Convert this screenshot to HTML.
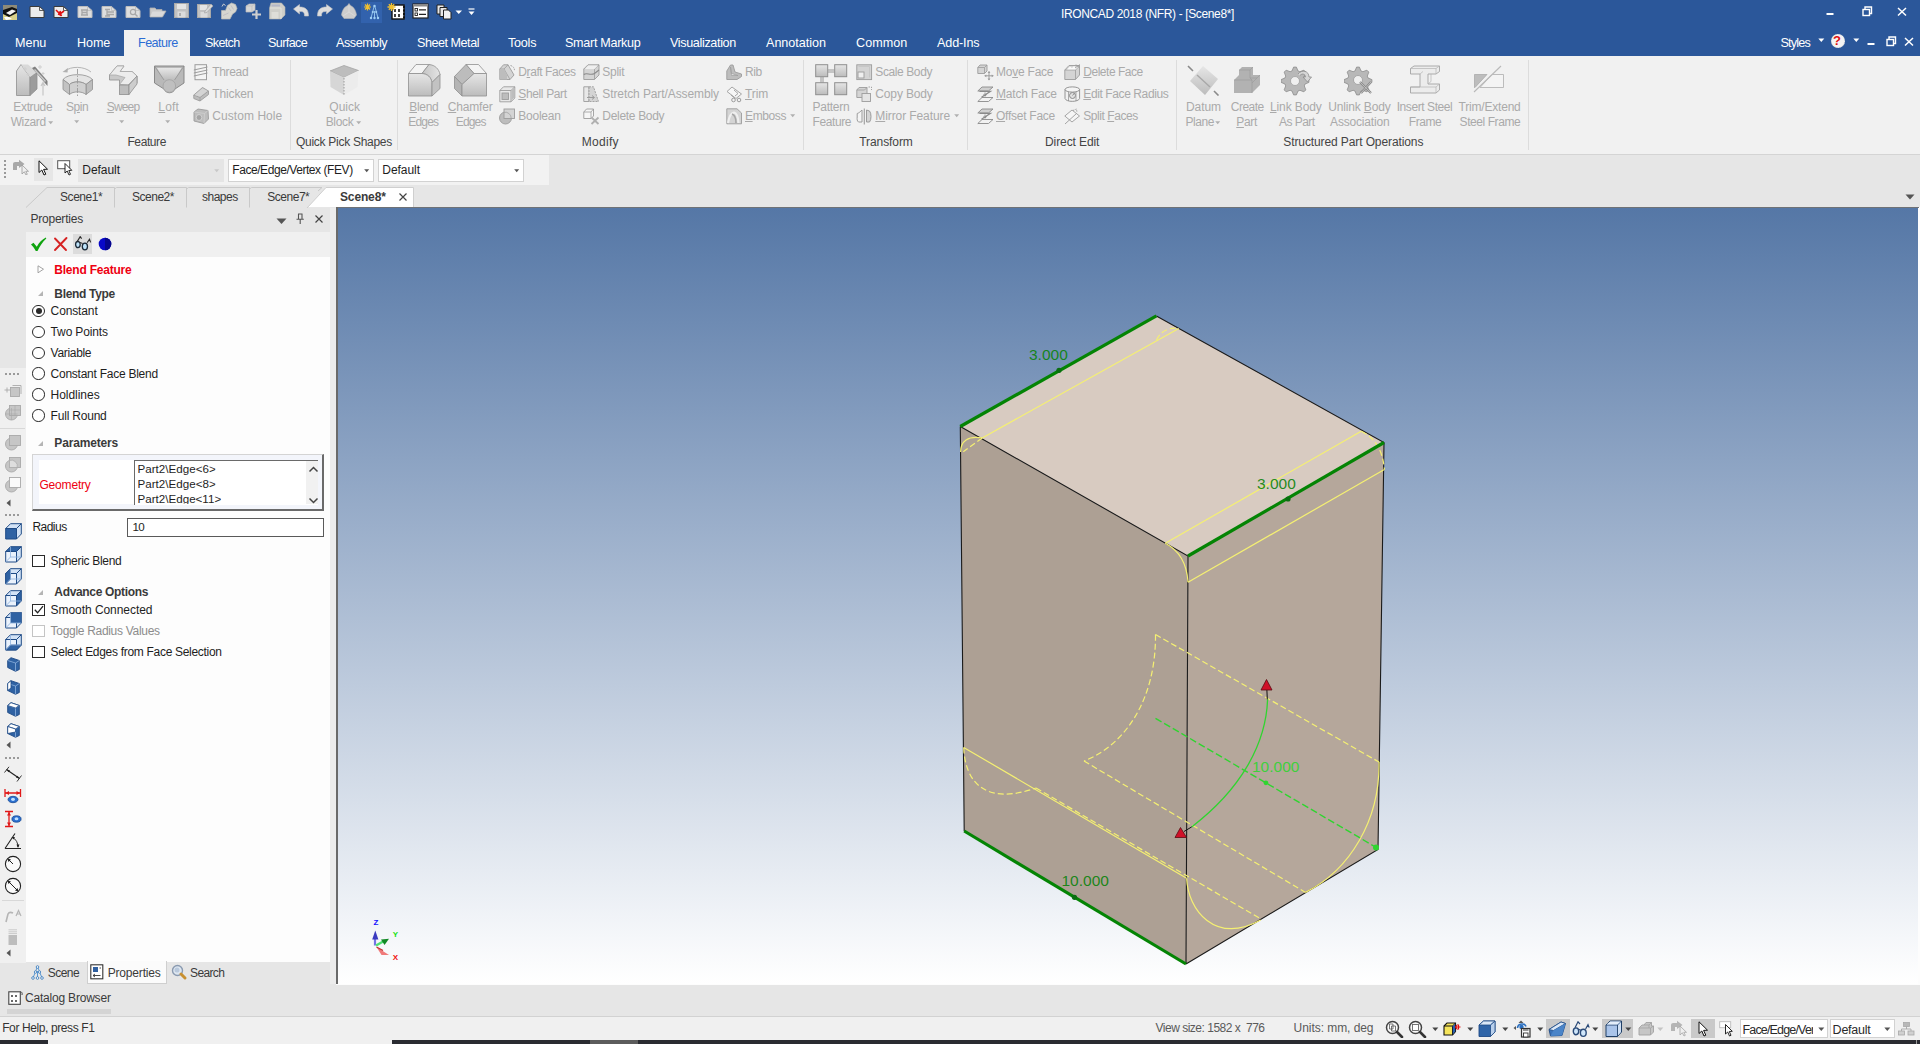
<!DOCTYPE html><html><head><meta charset="utf-8"><title>IRONCAD 2018 (NFR) - [Scene8*]</title><style>
html,body{margin:0;padding:0;}
body{width:1920px;height:1044px;overflow:hidden;background:#e6e6e6;position:relative;font-family:"Liberation Sans",sans-serif;font-size:12px;color:#1e1e1e;}
.a{position:absolute;white-space:nowrap;}
u{text-decoration:underline;text-underline-offset:1px;}
</style></head><body>
<div class="a" style="left:0px;top:0px;width:1920px;height:56px;background:#2b579a;"></div>
<div class="a" style="left:1061px;top:6.7px;font-size:12px;line-height:14px;color:#fff;letter-spacing:-0.369px;">IRONCAD 2018 (NFR) - [Scene8*]</div>
<div class="a" style="left:124px;top:30px;width:66px;height:27px;background:#f1f1f1;"></div>
<div class="a" style="left:15px;top:36px;font-size:12.6px;line-height:15px;color:#fff;letter-spacing:-0.054px;">Menu</div>
<div class="a" style="left:77px;top:36px;font-size:12.6px;line-height:15px;color:#fff;letter-spacing:-0.073px;">Home</div>
<div class="a" style="left:138px;top:36px;font-size:12.6px;line-height:15px;color:#2b6cd4;letter-spacing:-0.544px;">Feature</div>
<div class="a" style="left:205px;top:36px;font-size:12.6px;line-height:15px;color:#fff;letter-spacing:-0.653px;">Sketch</div>
<div class="a" style="left:268px;top:36px;font-size:12.6px;line-height:15px;color:#fff;letter-spacing:-0.615px;">Surface</div>
<div class="a" style="left:336px;top:36px;font-size:12.6px;line-height:15px;color:#fff;letter-spacing:-0.424px;">Assembly</div>
<div class="a" style="left:417px;top:36px;font-size:12.6px;line-height:15px;color:#fff;letter-spacing:-0.474px;">Sheet Metal</div>
<div class="a" style="left:508px;top:36px;font-size:12.6px;line-height:15px;color:#fff;letter-spacing:-0.241px;">Tools</div>
<div class="a" style="left:565px;top:36px;font-size:12.6px;line-height:15px;color:#fff;letter-spacing:-0.299px;">Smart Markup</div>
<div class="a" style="left:670px;top:36px;font-size:12.6px;line-height:15px;color:#fff;letter-spacing:-0.353px;">Visualization</div>
<div class="a" style="left:766px;top:36px;font-size:12.6px;line-height:15px;color:#fff;letter-spacing:-0.023px;">Annotation</div>
<div class="a" style="left:856px;top:36px;font-size:12.6px;line-height:15px;color:#fff;letter-spacing:0.034px;">Common</div>
<div class="a" style="left:937px;top:36px;font-size:12.6px;line-height:15px;color:#fff;letter-spacing:-0.129px;">Add-Ins</div>
<div class="a" style="left:1780.5px;top:36px;font-size:12.6px;line-height:15px;color:#fff;letter-spacing:-0.799px;">Styles</div>
<svg class="a" style="left:3px;top:5px;" width="15" height="16" viewBox="0 0 15 16"><rect x="0" y="0" width="14" height="15" fill="#d8d08a"/><rect x="0" y="0" width="14" height="6" fill="#8d8a78"/><path d="M0 5 L9 2 L14 4 L14 8 L6 12 L0 9 Z" fill="#111"/><path d="M3 8 L9 4.5 L13 6 L7 10 Z" fill="#f4f4f4"/><path d="M1 12 L6 12 L9 14 L3 15 Z" fill="#fff"/></svg>
<svg class="a" style="left:29px;top:5px;" width="17" height="14" viewBox="0 0 17 14"><path d="M1 1.5 L10.5 1.5 L15 5.5 L15 12.5 L1 12.5 Z" fill="#ececec" stroke="#3a3a3a" stroke-width="1"/><path d="M10.5 1.5 L10.5 5.5 L15 5.5" fill="none" stroke="#3a3a3a" stroke-width="0.8"/></svg>
<svg class="a" style="left:53px;top:5px;" width="17" height="14" viewBox="0 0 17 14"><path d="M1 1.5 L10.5 1.5 L15 5.5 L15 12.5 L1 12.5 Z" fill="#ececec" stroke="#3a3a3a" stroke-width="1"/><path d="M10.5 1.5 L10.5 5.5 L15 5.5" fill="none" stroke="#3a3a3a" stroke-width="0.8"/><path d="M3 5 L7 9 L11 6 M5 9 L9 10.5 M7 6 L8 11" stroke="#e01010" stroke-width="1.6" fill="none"/></svg>
<svg class="a" style="left:77px;top:5px;" width="17" height="14" viewBox="0 0 17 14"><path d="M1 1.5 L10.5 1.5 L15 5.5 L15 12.5 L1 12.5 Z" fill="#dedede" stroke="#bdbdbd" stroke-width="1"/><path d="M10.5 1.5 L10.5 5.5 L15 5.5" fill="none" stroke="#bdbdbd" stroke-width="0.8"/><path d="M4 5 L11 5 M4 10 L11 10 M5 5 L5 10 M10 5 L10 10 M5 7.5 L10 7.5" stroke="#a8a8a8" stroke-width="1.3" fill="none"/></svg>
<svg class="a" style="left:101px;top:5px;" width="17" height="14" viewBox="0 0 17 14"><path d="M1 1.5 L10.5 1.5 L15 5.5 L15 12.5 L1 12.5 Z" fill="#dedede" stroke="#bdbdbd" stroke-width="1"/><path d="M10.5 1.5 L10.5 5.5 L15 5.5" fill="none" stroke="#bdbdbd" stroke-width="0.8"/><path d="M4 4.5 L9 4.5 M6 7 L13 7 M6 9.5 L13 9.5 M4 11 L9 11 M6 4.5 L6 11" stroke="#a8a8a8" stroke-width="1.3" fill="none"/></svg>
<svg class="a" style="left:125px;top:5px;" width="17" height="14" viewBox="0 0 17 14"><path d="M1 1.5 L10.5 1.5 L15 5.5 L15 12.5 L1 12.5 Z" fill="#dedede" stroke="#bdbdbd" stroke-width="1"/><path d="M10.5 1.5 L10.5 5.5 L15 5.5" fill="none" stroke="#bdbdbd" stroke-width="0.8"/><circle cx="8" cy="7" r="2.6" fill="none" stroke="#a8a8a8" stroke-width="1.2"/><path d="M10 9 L12.5 11.5" stroke="#a8a8a8" stroke-width="1.4"/></svg>
<svg class="a" style="left:149px;top:6px;" width="18" height="12" viewBox="0 0 18 12"><path d="M1 2 L6 2 L7.5 3.5 L13 3.5 L13 5 L17 5 L13.5 11 L1 11 Z" fill="#c9c9c9" stroke="#b0b0b0" stroke-width="0.8"/><path d="M3.5 5.5 L16 5.5 L13 10.5 L1.2 10.5 Z" fill="#dadada"/></svg>
<svg class="a" style="left:174px;top:3px;" width="15" height="15" viewBox="0 0 15 15"><rect x="0.5" y="0.5" width="14" height="14" fill="#c2c2c2" stroke="#a9a9a9"/><rect x="3" y="1" width="9" height="5" fill="#e4e4e4"/><rect x="3.5" y="8.5" width="8" height="6" fill="#dcdcdc"/><rect x="5" y="10" width="2" height="3" fill="#b0b0b0"/></svg>
<svg class="a" style="left:197px;top:3px;" width="17" height="15" viewBox="0 0 17 15"><rect x="0.5" y="1.5" width="13" height="13" fill="#c2c2c2" stroke="#a9a9a9"/><rect x="3" y="2" width="7" height="5" fill="#e4e4e4"/><rect x="3.5" y="9" width="7" height="5.5" fill="#dcdcdc"/><path d="M8 8 L14 1 L16 3 L10 9.5 L7.5 10 Z" fill="#d8d8d8" stroke="#a5a5a5" stroke-width="0.7"/></svg>
<svg class="a" style="left:221px;top:2px;" width="17" height="18" viewBox="0 0 17 18"><path d="M0.5 8.5 L4.5 8.5 L6.5 3.5 L10.5 1 L14.5 2.5 L16 6.5 L14.5 10 L11.5 12 L9 17 L0.5 17 Z" fill="#d6d6d0" stroke="#bcbcb6" stroke-width="0.7"/><path d="M1 4.5 L2.5 2 L4.5 3.5" fill="none" stroke="#d0d0d0" stroke-width="1"/><path d="M7.5 5.5 L10 9 M10 3.5 L12.5 7.5 M2 13.5 L7.5 11" stroke="#bdbdc4" stroke-width="0.9"/></svg>
<svg class="a" style="left:245px;top:3px;" width="17" height="17" viewBox="0 0 17 17"><path d="M1 3 L4 1 L10 1 L10 7 L7 9 L1 9 Z" fill="#d6d6d6" stroke="#bcbcbc" stroke-width="0.7"/><path d="M1 3 L7 3 L7 9 M7 3 L10 1" fill="none" stroke="#bcbcbc" stroke-width="0.7"/><path d="M11.5 7 L11.5 16 M7 11.5 L16 11.5" stroke="#cfcfcf" stroke-width="2.2"/></svg>
<svg class="a" style="left:269px;top:2px;" width="17" height="18" viewBox="0 0 17 18"><path d="M0.5 6 L2 1 L12.5 1 L16 5 L16 13 L12 17 L0.5 17 Z" fill="#cfcfc9" stroke="#b5b5b0" stroke-width="0.6"/><path d="M1 6 L12 6 L12 17" fill="none" stroke="#e4e4de" stroke-width="0.9"/><rect x="2.5" y="10" width="7" height="6.5" fill="#deded8"/><rect x="2.5" y="2.5" width="8.5" height="2" fill="#b4b8c8"/></svg>
<svg class="a" style="left:293px;top:4px;" width="17" height="13" viewBox="0 0 17 13"><path d="M0.5 5 L6.5 0.5 L6.5 3 C12 3 15.5 5 15.5 12 L11.5 12 C11.5 8 10 7.5 6.5 7.5 L6.5 10 Z" fill="#dedede" stroke="#c4c4c4" stroke-width="0.6"/></svg>
<svg class="a" style="left:316px;top:4px;" width="17" height="13" viewBox="0 0 17 13"><path d="M16.5 5 L10.5 0.5 L10.5 3 C5 3 1.5 5 1.5 12 L5.5 12 C5.5 8 7 7.5 10.5 7.5 L10.5 10 Z" fill="#dedede" stroke="#c4c4c4" stroke-width="0.6"/></svg>
<svg class="a" style="left:340px;top:3px;" width="18" height="17" viewBox="0 0 18 17"><path d="M9 0.5 L10.5 2.5 C14 4 16 8 16.5 12 L14 15.5 L4 15.5 L1.5 12 C2 8 4 4 7.5 2.5 Z" fill="#cdcdcd" stroke="#b5b5b5" stroke-width="0.6"/><path d="M9 3 L9 9 L3 13 M9 9 L15 13" stroke="#dcdcdc" stroke-width="0.8" fill="none"/></svg>
<div class="a" style="left:361px;top:2px;width:21px;height:21px;background:#3262ad"></div>
<svg class="a" style="left:363px;top:3px;" width="19" height="18" viewBox="0 0 19 18"><path d="M4.5 0.5 l0 7 M1 4 l7 0 M2 1.5 l5 5 M7 1.5 l-5 5" stroke="#f0c030" stroke-width="1.2"/><path d="M11.5 2 L8 15 M11.5 2 L15 15 M11.5 8 L11.5 15" stroke="#8fc0ea" stroke-width="1" fill="none"/><circle cx="11.5" cy="3" r="1.2" fill="#9fd0f5"/><circle cx="9.8" cy="9" r="1.1" fill="#9fd0f5"/><circle cx="13.2" cy="9" r="1.1" fill="#9fd0f5"/><circle cx="8" cy="15" r="1.2" fill="#9fd0f5"/><circle cx="11.5" cy="15" r="1.2" fill="#9fd0f5"/><circle cx="15" cy="15" r="1.2" fill="#9fd0f5"/></svg>
<svg class="a" style="left:387px;top:3px;" width="19" height="17" viewBox="0 0 19 17"><rect x="5" y="2" width="12" height="14" fill="#fff" stroke="#111" stroke-width="1.4"/><path d="M8 6 l0 3 M8 11 l0 3 M12 6 l0 3 M12 11 l0 3" stroke="#111" stroke-width="1.6"/><path d="M17 3 l0 12" stroke="#111" stroke-width="2" stroke-dasharray="2 1.5"/><path d="M4.5 0 l0 8 M0.5 4 l8 0 M1.8 1.3 l5.4 5.4 M7.2 1.3 l-5.4 5.4" stroke="#f0c030" stroke-width="1.3"/></svg>
<svg class="a" style="left:412px;top:3px;" width="17" height="16" viewBox="0 0 17 16"><rect x="1" y="1" width="15" height="14" fill="#fff" stroke="#222" stroke-width="1.2"/><rect x="1" y="1" width="15" height="2.5" fill="#888"/><rect x="3" y="5.5" width="2.5" height="2.5" fill="none" stroke="#222" stroke-width="0.9"/><rect x="3" y="10" width="2.5" height="2.5" fill="none" stroke="#222" stroke-width="0.9"/><path d="M7 6.8 L14 6.8 M7 11.3 L14 11.3" stroke="#222" stroke-width="1.2"/></svg>
<svg class="a" style="left:436px;top:4px;" width="18" height="16" viewBox="0 0 18 16"><path d="M1 1 L8 1 L8 10 L1 10 Z" fill="#e8e8e8" stroke="#222" stroke-width="1"/><path d="M4 3.5 L11 3.5 L11 12.5 L4 12.5 Z" fill="#e8e8e8" stroke="#222" stroke-width="1"/><path d="M7.5 6 L12.5 6 L15 8.5 L15 15 L7.5 15 Z" fill="#f2f2f2" stroke="#222" stroke-width="1"/></svg>
<svg class="a" style="left:455px;top:10px;" width="8" height="5" viewBox="0 0 8 5"><path d="M0.5 0.5 L7 0.5 L3.75 4 Z" fill="#fff"/></svg>
<svg class="a" style="left:468px;top:8px;" width="8" height="8" viewBox="0 0 8 8"><path d="M0.5 1 L6.5 1" stroke="#fff" stroke-width="1.2"/><path d="M0.5 3.5 L6.5 3.5 L3.5 7 Z" fill="#fff"/></svg>
<svg class="a" style="left:1826px;top:12px;" width="9" height="4" viewBox="0 0 9 4"><path d="M0.5 2 L7.5 2" stroke="#fff" fill="none" stroke-width="2"/></svg>
<svg class="a" style="left:1862px;top:6px;" width="11" height="11" viewBox="0 0 11 11"><path d="M3 3 L3 1 L9.5 1 L9.5 7.5 L7.5 7.5" stroke="#fff" fill="none" stroke-width="1.4"/><rect x="1" y="3.5" width="6.5" height="6" stroke="#fff" fill="none" stroke-width="1.4"/></svg>
<svg class="a" style="left:1897px;top:7px;" width="10" height="10" viewBox="0 0 10 10"><path d="M1 1 L9 8.5 M9 1 L1 8.5" stroke="#fff" fill="none" stroke-width="1.5"/></svg>
<svg class="a" style="left:1818px;top:38px;" width="7" height="5" viewBox="0 0 7 5"><path d="M0.3 0.5 L6.3 0.5 L3.3 4 Z" fill="#fff"/></svg>
<div class="a" style="left:1831px;top:34px;width:12px;height:12px;border-radius:50%;background:#f4f4f4;border:1px dotted #ddd;box-sizing:content-box"></div>
<div class="a" style="left:1833px;top:33px;font-size:13px;font-weight:bold;color:#e01010;line-height:15px">?</div>
<svg class="a" style="left:1853px;top:38px;" width="7" height="5" viewBox="0 0 7 5"><path d="M0.3 0.5 L6.3 0.5 L3.3 4 Z" fill="#fff"/></svg>
<svg class="a" style="left:1867px;top:42px;" width="9" height="4" viewBox="0 0 9 4"><path d="M0.5 2 L7.5 2" stroke="#fff" fill="none" stroke-width="2"/></svg>
<svg class="a" style="left:1886px;top:36px;" width="11" height="11" viewBox="0 0 11 11"><path d="M3 3 L3 1 L9.5 1 L9.5 7.5 L7.5 7.5" stroke="#fff" fill="none" stroke-width="1.4"/><rect x="1" y="3.5" width="6.5" height="6" stroke="#fff" fill="none" stroke-width="1.4"/></svg>
<svg class="a" style="left:1904px;top:37px;" width="10" height="10" viewBox="0 0 10 10"><path d="M1 1 L9 8.5 M9 1 L1 8.5" stroke="#fff" fill="none" stroke-width="1.5"/></svg>
<div class="a" style="left:0px;top:56px;width:1920px;height:98px;background:#f1f1f1;border-bottom:1px solid #d4d4d4;"></div>
<div class="a" style="left:290px;top:60px;width:1px;height:90px;background:#dcdcdc;"></div>
<div class="a" style="left:397px;top:60px;width:1px;height:90px;background:#dcdcdc;"></div>
<div class="a" style="left:803px;top:60px;width:1px;height:90px;background:#dcdcdc;"></div>
<div class="a" style="left:967px;top:60px;width:1px;height:90px;background:#dcdcdc;"></div>
<div class="a" style="left:1176px;top:60px;width:1px;height:90px;background:#dcdcdc;"></div>
<div class="a" style="left:1528px;top:60px;width:1px;height:90px;background:#dcdcdc;"></div>
<div class="a" style="left:146.7px;top:135px;font-size:12px;line-height:14px;color:#444;transform:translateX(-50%);letter-spacing:-0.408px;">Feature</div>
<div class="a" style="left:344px;top:135px;font-size:12px;line-height:14px;color:#444;transform:translateX(-50%);letter-spacing:-0.278px;">Quick Pick Shapes</div>
<div class="a" style="left:600.3px;top:135px;font-size:12px;line-height:14px;color:#444;transform:translateX(-50%);letter-spacing:0.326px;">Modify</div>
<div class="a" style="left:886px;top:135px;font-size:12px;line-height:14px;color:#444;transform:translateX(-50%);letter-spacing:-0.093px;">Transform</div>
<div class="a" style="left:1072.2px;top:135px;font-size:12px;line-height:14px;color:#444;transform:translateX(-50%);letter-spacing:-0.096px;">Direct Edit</div>
<div class="a" style="left:1353.3px;top:135px;font-size:12px;line-height:14px;color:#444;transform:translateX(-50%);letter-spacing:-0.105px;">Structured Part Operations</div>
<div class="a" style="left:32.8px;top:100px;font-size:12px;line-height:15px;color:#aaaaaa;transform:translateX(-50%);letter-spacing:-0.337px;">Extrude</div>
<div class="a" style="left:28.2px;top:115px;font-size:12px;line-height:15px;color:#aaaaaa;transform:translateX(-50%);letter-spacing:-0.391px;">Wizard</div>
<div class="a" style="left:77.2px;top:100px;font-size:12px;line-height:15px;color:#aaaaaa;transform:translateX(-50%);letter-spacing:-0.437px;">S<u>p</u>in</div>
<div class="a" style="left:123px;top:100px;font-size:12px;line-height:15px;color:#aaaaaa;transform:translateX(-50%);letter-spacing:-0.821px;"><u>S</u>weep</div>
<div class="a" style="left:168.7px;top:100px;font-size:12px;line-height:15px;color:#aaaaaa;transform:translateX(-50%);letter-spacing:0.167px;"><u>L</u>oft</div>
<div class="a" style="left:344.7px;top:100px;font-size:12px;line-height:15px;color:#aaaaaa;transform:translateX(-50%);letter-spacing:0.002px;">Quick</div>
<div class="a" style="left:339.5px;top:115px;font-size:12px;line-height:15px;color:#aaaaaa;transform:translateX(-50%);letter-spacing:-0.349px;">Block</div>
<div class="a" style="left:423.8px;top:100px;font-size:12px;line-height:15px;color:#aaaaaa;transform:translateX(-50%);letter-spacing:-0.341px;"><u>B</u>lend</div>
<div class="a" style="left:423.3px;top:115px;font-size:12px;line-height:15px;color:#aaaaaa;transform:translateX(-50%);letter-spacing:-0.806px;">Edges</div>
<div class="a" style="left:470.2px;top:100px;font-size:12px;line-height:15px;color:#aaaaaa;transform:translateX(-50%);letter-spacing:-0.147px;"><u>C</u>hamfer</div>
<div class="a" style="left:470.7px;top:115px;font-size:12px;line-height:15px;color:#aaaaaa;transform:translateX(-50%);letter-spacing:-0.806px;">Edges</div>
<div class="a" style="left:831px;top:100px;font-size:12px;line-height:15px;color:#aaaaaa;transform:translateX(-50%);letter-spacing:-0.243px;">Pattern</div>
<div class="a" style="left:831.8px;top:115px;font-size:12px;line-height:15px;color:#aaaaaa;transform:translateX(-50%);letter-spacing:-0.408px;">Feature</div>
<div class="a" style="left:1203.5px;top:100px;font-size:12px;line-height:15px;color:#aaaaaa;transform:translateX(-50%);letter-spacing:-0.069px;">Datum</div>
<div class="a" style="left:1199.8px;top:115px;font-size:12px;line-height:15px;color:#aaaaaa;transform:translateX(-50%);letter-spacing:-0.441px;">Plane</div>
<div class="a" style="left:1247.3px;top:100px;font-size:12px;line-height:15px;color:#aaaaaa;transform:translateX(-50%);letter-spacing:-0.505px;">Create</div>
<div class="a" style="left:1246.6px;top:115px;font-size:12px;line-height:15px;color:#aaaaaa;transform:translateX(-50%);letter-spacing:-0.333px;"><u>P</u>art</div>
<div class="a" style="left:1295.8px;top:100px;font-size:12px;line-height:15px;color:#aaaaaa;transform:translateX(-50%);letter-spacing:-0.113px;"><u>L</u>ink Body</div>
<div class="a" style="left:1296.8px;top:115px;font-size:12px;line-height:15px;color:#aaaaaa;transform:translateX(-50%);letter-spacing:-0.508px;">As Part</div>
<div class="a" style="left:1359.4px;top:100px;font-size:12px;line-height:15px;color:#aaaaaa;transform:translateX(-50%);letter-spacing:-0.160px;">Unlink <u>B</u>ody</div>
<div class="a" style="left:1359.8px;top:115px;font-size:12px;line-height:15px;color:#aaaaaa;transform:translateX(-50%);letter-spacing:-0.170px;">Association</div>
<div class="a" style="left:1424.5px;top:100px;font-size:12px;line-height:15px;color:#aaaaaa;transform:translateX(-50%);letter-spacing:-0.417px;">Insert Steel</div>
<div class="a" style="left:1425px;top:115px;font-size:12px;line-height:15px;color:#aaaaaa;transform:translateX(-50%);letter-spacing:-0.474px;">Frame</div>
<div class="a" style="left:1489.6px;top:100px;font-size:12px;line-height:15px;color:#aaaaaa;transform:translateX(-50%);letter-spacing:-0.205px;">Trim/Extend</div>
<div class="a" style="left:1489.9px;top:115px;font-size:12px;line-height:15px;color:#aaaaaa;transform:translateX(-50%);letter-spacing:-0.433px;">Steel Frame</div>
<div class="a" style="left:212.3px;top:65px;font-size:12px;line-height:14px;color:#aaaaaa;letter-spacing:-0.339px;">Thread</div>
<div class="a" style="left:212.3px;top:87px;font-size:12px;line-height:14px;color:#aaaaaa;letter-spacing:-0.147px;">Thicken</div>
<div class="a" style="left:212.3px;top:109px;font-size:12px;line-height:14px;color:#aaaaaa;letter-spacing:0.058px;">Custom Hole</div>
<div class="a" style="left:518.3px;top:65px;font-size:12px;line-height:14px;color:#aaaaaa;letter-spacing:-0.421px;">D<u>r</u>aft Faces</div>
<div class="a" style="left:518.3px;top:87px;font-size:12px;line-height:14px;color:#aaaaaa;letter-spacing:-0.365px;"><u>S</u>hell Part</div>
<div class="a" style="left:518.3px;top:109px;font-size:12px;line-height:14px;color:#aaaaaa;letter-spacing:-0.235px;">Boolean</div>
<div class="a" style="left:602.3px;top:65px;font-size:12px;line-height:14px;color:#aaaaaa;letter-spacing:-0.269px;">Split</div>
<div class="a" style="left:602.3px;top:87px;font-size:12px;line-height:14px;color:#aaaaaa;letter-spacing:-0.096px;">Stretch Part/Assembly</div>
<div class="a" style="left:602.3px;top:109px;font-size:12px;line-height:14px;color:#aaaaaa;letter-spacing:-0.307px;">Delete Body</div>
<div class="a" style="left:745px;top:65px;font-size:12px;line-height:14px;color:#aaaaaa;letter-spacing:-0.439px;">Rib</div>
<div class="a" style="left:745px;top:87px;font-size:12px;line-height:14px;color:#aaaaaa;letter-spacing:-0.066px;"><u>T</u>rim</div>
<div class="a" style="left:745px;top:109px;font-size:12px;line-height:14px;color:#aaaaaa;letter-spacing:-0.393px;"><u>E</u>mboss</div>
<div class="a" style="left:875.3px;top:65px;font-size:12px;line-height:14px;color:#aaaaaa;letter-spacing:-0.400px;">Scale Body</div>
<div class="a" style="left:875.3px;top:87px;font-size:12px;line-height:14px;color:#aaaaaa;letter-spacing:-0.145px;">Copy Body</div>
<div class="a" style="left:875.3px;top:109px;font-size:12px;line-height:14px;color:#aaaaaa;letter-spacing:-0.095px;"><u>M</u>irror Feature</div>
<div class="a" style="left:996px;top:65px;font-size:12px;line-height:14px;color:#aaaaaa;letter-spacing:-0.229px;">Mo<u>v</u>e Face</div>
<div class="a" style="left:996px;top:87px;font-size:12px;line-height:14px;color:#aaaaaa;letter-spacing:-0.200px;"><u>M</u>atch Face</div>
<div class="a" style="left:996px;top:109px;font-size:12px;line-height:14px;color:#aaaaaa;letter-spacing:-0.257px;"><u>O</u>ffset Face</div>
<div class="a" style="left:1083.3px;top:65px;font-size:12px;line-height:14px;color:#aaaaaa;letter-spacing:-0.484px;"><u>D</u>elete Face</div>
<div class="a" style="left:1083.3px;top:87px;font-size:12px;line-height:14px;color:#aaaaaa;letter-spacing:-0.399px;"><u>E</u>dit Face Radius</div>
<div class="a" style="left:1083.3px;top:109px;font-size:12px;line-height:14px;color:#aaaaaa;letter-spacing:-0.454px;">Split <u>F</u>aces</div>
<svg width="0" height="0" style="position:absolute"><defs><linearGradient id="gv" x1="0" y1="0" x2="0" y2="1"><stop offset="0" stop-color="#e6e6e6"/><stop offset="1" stop-color="#bcbcbc"/></linearGradient><linearGradient id="gh" x1="0" y1="0" x2="1" y2="0"><stop offset="0" stop-color="#c4c4c4"/><stop offset="1" stop-color="#e4e4e4"/></linearGradient></defs></svg>
<svg class="a" style="left:16px;top:64px;" width="32" height="32" viewBox="0 0 32 32"><path d="M0.5 7 L5 0.5 L14 13 L14 31.5 L0.5 31.5 Z" fill="url(#gv)" stroke="#8f8f8f" stroke-width="0.8"/><path d="M14 13 L21 8 L21 25 L14 31.5 Z" fill="#9c9c9c" stroke="#8f8f8f" stroke-width="0.8"/><path d="M5 0.5 L12 0.5 L21 8 L14 13 Z" fill="#d9d9d9"/><path d="M16 4 L19 2.5 L31.5 17 L31.5 22 Z" fill="#7f7f7f"/><path d="M18.5 5.5 L29.5 17.5" stroke="#c8c8c8" stroke-width="1.6"/><path d="M27 31.5 L27 19 M25 22 L27 18.5 L29 22" stroke="#c6c6c6" stroke-width="1.2" fill="none"/><path d="M9 3 l0 4 M7 5 l4 0 M24 1 l0 4 M22 3 l4 0 M12 9 l0 3 M10.5 10.5 l3 0 M27 8 l0 3 M25.5 9.5 l3 0" stroke="#cfcfcf" stroke-width="1"/></svg>
<svg class="a" style="left:62px;top:65px;" width="32" height="31" viewBox="0 0 32 31"><path d="M29 7 C22 1 9 1 3 6" fill="none" stroke="#b5b5b5" stroke-width="1"/><path d="M0.5 7 L6 3 L5.5 7.5 Z" fill="#b0b0b0"/><path d="M1 14.5 C6 8 25 8 30.5 14.5 L24 19.5 C20 16 11 16 7.5 19.5 Z" fill="#e4e4e4" stroke="#8f8f8f" stroke-width="0.8"/><path d="M1 14.5 L7.5 19.5 L7.5 29.5 L1 24.5 Z" fill="#c2c2c2" stroke="#8f8f8f" stroke-width="0.8"/><path d="M30.5 14.5 L24 19.5 L24 29.5 L30.5 24.5 Z" fill="#bdbdbd" stroke="#8f8f8f" stroke-width="0.8"/><path d="M7.5 19.5 C11 16 20 16 24 19.5 L24 29.5 C20 26 11 26 7.5 29.5 Z" fill="#d0d0d0" stroke="#8f8f8f" stroke-width="0.8"/><path d="M15.5 4 L15.5 31" stroke="#9a9a9a" stroke-width="0.9" stroke-dasharray="5 1.5 1.5 1.5"/></svg>
<svg class="a" style="left:108px;top:65px;" width="31" height="31" viewBox="0 0 31 31"><path d="M1.5 10 L9 1 L16 1 L12 6.5 L24 6.5 L29 11 L29 18 L21 27 L21 19.5 L11.5 19.5 L11.5 15 L1.5 15 Z" fill="#c9c9c9" stroke="#8f8f8f" stroke-width="0.8"/><path d="M1.5 10 L9 1 L16 1 L12 6.5 L24 6.5 L29 11 L20 20 L11.5 19.5 L17 12.5 L8 10 Z" fill="#ececec" stroke="#a5a5a5" stroke-width="0.7"/><rect x="11.5" y="20" width="9.5" height="9.5" fill="#bdbdbd" stroke="#8f8f8f" stroke-width="0.8"/><path d="M21 20 L29 11 L29 19 L21 29.5 Z" fill="#cdcdcd" stroke="#8f8f8f" stroke-width="0.8"/></svg>
<svg class="a" style="left:154px;top:65px;" width="31" height="31" viewBox="0 0 31 31"><path d="M0.5 1 L30 1 L30 18 L21 24 C19 29 12 29 10 24 L0.5 18 Z" fill="#b9b9b9" stroke="#808080" stroke-width="0.9"/><path d="M3 3 L27.5 3 L20.5 15 L10 15 Z" fill="url(#gv)"/><path d="M0.5 1 L10 15 M30 1 L20.5 15" stroke="#8f8f8f" stroke-width="0.7"/><circle cx="15.3" cy="21" r="6.3" fill="#bfbfbf" stroke="#a2a2a2" stroke-width="0.8"/></svg>
<svg class="a" style="left:329px;top:65px;" width="31" height="31" viewBox="0 0 31 31"><path d="M1 6 L15 0.5 L29.5 5.5 L15 12.5 Z" fill="#bdbdbd" stroke="#a5a5a5" stroke-width="0.8"/><path d="M1 6 L15 12.5 L15 30 L1.5 22 Z" fill="#d6d6d6"/><path d="M15 12.5 L29.5 5.5 L28.5 22 L15 30 Z" fill="#ececec"/><path d="M15 13 L15 30" stroke="#999" stroke-width="1" stroke-dasharray="1.5 1.5"/></svg>
<svg class="a" style="left:408px;top:64px;" width="33" height="33" viewBox="0 0 33 33"><path d="M0.5 9.5 L8 0.5 L21 0.5 L14 9.5 Z" fill="#f4f4f4" stroke="#8f8f8f" stroke-width="0.8"/><path d="M14 9.5 L21 0.5 C27 1 31 5 32 10.5 L24 18.5 C23 13 19.5 10 14 9.5 Z" fill="url(#gh)" stroke="#8f8f8f" stroke-width="0.8"/><path d="M0.5 9.5 L14 9.5 C19.5 10 23 13 24 18.5 L24 32 L0.5 32 Z" fill="url(#gv)" stroke="#8f8f8f" stroke-width="0.8"/><path d="M24 18.5 L32 10.5 L32 24.5 L24 32 Z" fill="#c2c2c2" stroke="#8f8f8f" stroke-width="0.8"/></svg>
<svg class="a" style="left:454px;top:64px;" width="33" height="33" viewBox="0 0 33 33"><path d="M12 0.5 L24.5 0.5 L32.5 9.5 L20 9.5 Z" fill="#f4f4f4" stroke="#8f8f8f" stroke-width="0.8"/><path d="M12 0.5 L20 9.5 L8 20.5 L0.5 12.5 Z" fill="#bcbcbc" stroke="#8f8f8f" stroke-width="0.8"/><path d="M0.5 12.5 L8 20.5 L8 32 L0.5 24.5 Z" fill="#b4b4b4" stroke="#8f8f8f" stroke-width="0.8"/><path d="M20 9.5 L32.5 9.5 L32.5 32 L8 32 L8 20.5 Z" fill="url(#gv)" stroke="#8f8f8f" stroke-width="0.8"/></svg>
<svg class="a" style="left:815px;top:64px;" width="33" height="32" viewBox="0 0 33 32"><rect x="0.7" y="0.7" width="12" height="12" fill="url(#gv)" stroke="#8f8f8f" stroke-width="1"/><rect x="19.7" y="0.7" width="12" height="12" fill="url(#gv)" stroke="#8f8f8f" stroke-width="1"/><rect x="0.7" y="18.7" width="12" height="12" fill="url(#gv)" stroke="#8f8f8f" stroke-width="1"/><rect x="19.7" y="18.7" width="12" height="12" fill="url(#gv)" stroke="#8f8f8f" stroke-width="1"/><path d="M13 6 L19.5 6 M13 8 L19.5 8 M6 13 L6 18.5 M8 13 L8 18.5" stroke="#8f8f8f" stroke-width="0.9"/></svg>
<svg class="a" style="left:1187px;top:65px;" width="33" height="31" viewBox="0 0 33 31"><path d="M16 1 L31 14 L18 30 L3 16 Z" fill="url(#gv)"/><path d="M1 1 L6 6 M27 26 L31.5 30.5" stroke="#8a8a8a" stroke-width="1.6"/><path d="M10 10 L23 22" stroke="#a8a8a8" stroke-width="1.4"/></svg>
<svg class="a" style="left:1233px;top:66px;" width="29" height="28" viewBox="0 0 29 28"><path d="M9 1 L20 1 L20 9 L27 9 L27 19 L19 27 L1 27 L1 14 L6 9 L6 4 Z" fill="#b2b2b2"/><path d="M6 4 L17 4 L20 1 M17 4 L17 12 L24 12 L27 9 M1 14 L19 14 L19 27 M17 12 L19 14 M24 12 L19 17" stroke="#9c9c9c" stroke-width="0.7" fill="none"/></svg>
<svg class="a" style="left:1281px;top:65px;" width="32" height="31" viewBox="0 0 32 31"><polygon points="27.9,14.6 27.9,17.4 24.0,19.0 23.3,20.9 24.8,24.9 22.9,26.8 18.9,25.3 17.0,26.0 15.4,29.9 12.6,29.9 11.0,26.0 9.1,25.3 5.1,26.8 3.2,24.9 4.7,20.9 4.0,19.0 0.1,17.4 0.1,14.6 4.0,13.0 4.7,11.1 3.2,7.1 5.1,5.2 9.1,6.7 11.0,6.0 12.6,2.1 15.4,2.1 17.0,6.0 18.9,6.7 22.9,5.2 24.8,7.1 23.3,11.1 24.0,13.0" fill="#b8b8b8" stroke="#8c8c8c" stroke-width="0.8"/><circle cx="14" cy="16" r="4.5" fill="#efefef" stroke="#9a9a9a" stroke-width="0.7"/><path d="M17 9 C21 4 28 6 28 12 L30.5 12 L26.5 17 L22 12 L24.5 12 C24.5 9 21 8 19 10.5" fill="#d6d6d6" stroke="#8c8c8c" stroke-width="0.8"/></svg>
<svg class="a" style="left:1344px;top:65px;" width="32" height="31" viewBox="0 0 32 31"><polygon points="27.9,14.6 27.9,17.4 24.0,19.0 23.3,20.9 24.8,24.9 22.9,26.8 18.9,25.3 17.0,26.0 15.4,29.9 12.6,29.9 11.0,26.0 9.1,25.3 5.1,26.8 3.2,24.9 4.7,20.9 4.0,19.0 0.1,17.4 0.1,14.6 4.0,13.0 4.7,11.1 3.2,7.1 5.1,5.2 9.1,6.7 11.0,6.0 12.6,2.1 15.4,2.1 17.0,6.0 18.9,6.7 22.9,5.2 24.8,7.1 23.3,11.1 24.0,13.0" fill="#b8b8b8" stroke="#8c8c8c" stroke-width="0.8"/><circle cx="14" cy="15" r="4.5" fill="#efefef" stroke="#9a9a9a" stroke-width="0.8"/><path d="M16 17 L27 28 M27 17 L17 28" stroke="#8a8a8a" stroke-width="2.2"/><path d="M16 17 L27 28 M27 17 L17 28" stroke="#c9c9c9" stroke-width="0.8"/></svg>
<svg class="a" style="left:1409px;top:65px;" width="33" height="30" viewBox="0 0 33 30"><path d="M1.5 3.5 L5 1 L30.5 1 L30.5 6.5 L27 9 L19 9 L19 19 L30.5 19 L30.5 25 L27 28 L1.5 28 L1.5 22 L11 22 L11 9 L1.5 9 Z" fill="#ececec" stroke="#a4a4a4" stroke-width="0.9"/><path d="M1.5 3.5 L27 3.5 L30.5 1 M27 3.5 L27 9 M11 9 L14 6.5 M19 19 L22 16.5 L22 9 M1.5 22 L27 22 L30.5 19 M27 22 L27 28" stroke="#b5b5b5" stroke-width="0.7" fill="none"/></svg>
<svg class="a" style="left:1473px;top:65px;" width="33" height="29" viewBox="0 0 33 29"><path d="M1.5 9.5 L14 9.5 L2 22.5 L1.5 22.5 Z" fill="#bdbdbd" stroke="#a5a5a5" stroke-width="0.7"/><path d="M19 9.5 L30.5 9.5 L30.5 22.5 L7 22.5 Z" fill="#f4f4f4" stroke="#b5b5b5" stroke-width="0.9"/><path d="M1 27 L28 1" stroke="#b9b9b9" stroke-width="1.1"/></svg>
<svg class="a" style="left:48px;top:121px;" width="6" height="4" viewBox="0 0 6 4"><path d="M0.2 0.3 L5.2 0.3 L2.7 3.3 Z" fill="#b0b0b0"/></svg>
<svg class="a" style="left:74px;top:120px;" width="6" height="4" viewBox="0 0 6 4"><path d="M0.2 0.3 L5.2 0.3 L2.7 3.3 Z" fill="#b0b0b0"/></svg>
<svg class="a" style="left:119px;top:120px;" width="6" height="4" viewBox="0 0 6 4"><path d="M0.2 0.3 L5.2 0.3 L2.7 3.3 Z" fill="#b0b0b0"/></svg>
<svg class="a" style="left:165px;top:120px;" width="6" height="4" viewBox="0 0 6 4"><path d="M0.2 0.3 L5.2 0.3 L2.7 3.3 Z" fill="#b0b0b0"/></svg>
<svg class="a" style="left:356px;top:121px;" width="6" height="4" viewBox="0 0 6 4"><path d="M0.2 0.3 L5.2 0.3 L2.7 3.3 Z" fill="#b0b0b0"/></svg>
<svg class="a" style="left:1215px;top:121px;" width="6" height="4" viewBox="0 0 6 4"><path d="M0.2 0.3 L5.2 0.3 L2.7 3.3 Z" fill="#b0b0b0"/></svg>
<svg class="a" style="left:790px;top:114px;" width="6" height="4" viewBox="0 0 6 4"><path d="M0.2 0.3 L5.2 0.3 L2.7 3.3 Z" fill="#b0b0b0"/></svg>
<svg class="a" style="left:954px;top:114px;" width="6" height="4" viewBox="0 0 6 4"><path d="M0.2 0.3 L5.2 0.3 L2.7 3.3 Z" fill="#b0b0b0"/></svg>
<svg class="a" style="left:193px;top:64px;" width="17" height="17" viewBox="0 0 17 17"><rect x="2" y="0.7" width="11.5" height="15" fill="#f4f4f4" stroke="#9c9c9c" stroke-width="1"/><path d="M0.8 6 L14.5 3 M0.8 9 L14.5 6 M0.8 12 L14.5 9" stroke="#9c9c9c" stroke-width="1" fill="none"/></svg>
<svg class="a" style="left:193px;top:86px;" width="17" height="17" viewBox="0 0 17 17"><path d="M0.8 9 L9.5 1.5 L15.5 5 L15.5 8.5 L7 15 L0.8 12.5 Z" fill="#bdbdbd" stroke="#9c9c9c" stroke-width="0.9"/><path d="M0.8 9 L7 11.5 L15.5 5 M7 11.5 L7 15" fill="none" stroke="#9c9c9c" stroke-width="0.8"/><path d="M1.5 9 L9.5 2.3 L14.5 5 L7 10.7 Z" fill="#d4d4d4"/></svg>
<svg class="a" style="left:193px;top:108px;" width="17" height="17" viewBox="0 0 17 17"><path d="M1 4 L5 1 L15 2.5 L15.5 11 L11 15.5 L1 13 Z" fill="#bdbdbd" stroke="#9c9c9c" stroke-width="0.9"/><path d="M1 4 L11.5 5.5 L11 15.5 M11.5 5.5 L15 2.5" fill="none" stroke="#cfcfcf" stroke-width="0.8"/><ellipse cx="6" cy="9.5" rx="2.8" ry="3" fill="#a5a5a5" stroke="#d8d8d8" stroke-width="0.8"/></svg>
<svg class="a" style="left:499px;top:64px;" width="17" height="17" viewBox="0 0 17 17"><path d="M0.8 5 L4.5 0.8 L9 0.8 L15 11 L11 15.5 L0.8 15.5 Z" fill="#d4d4d4" stroke="#9c9c9c" stroke-width="0.9"/><path d="M0.8 5 L5 5 L11 15.5 M5 5 L9 0.8" fill="none" stroke="#9c9c9c" stroke-width="0.8"/><path d="M0.8 5 L5 5 L8 10.5 L8 15.5 L0.8 15.5 Z" fill="#bdbdbd"/><path d="M11.5 1.5 C14 2 15.5 4 15.5 6.5" fill="none" stroke="#9c9c9c" stroke-width="0.9" stroke-dasharray="1.5 1"/></svg>
<svg class="a" style="left:499px;top:86px;" width="17" height="17" viewBox="0 0 17 17"><path d="M0.8 4.5 L4.5 0.8 L15.8 0.8 L15.8 12 L12 15.8 L0.8 15.8 Z" fill="#e8e8e8" stroke="#9c9c9c" stroke-width="0.9"/><path d="M0.8 4.5 L12 4.5 L12 15.8 M12 4.5 L15.8 0.8" fill="none" stroke="#9c9c9c" stroke-width="0.9"/><rect x="3" y="7" width="6.5" height="6.5" fill="#bdbdbd" stroke="#9c9c9c" stroke-width="0.9"/><path d="M12.5 4.8 L15.3 2 L15.3 11.5 L12.5 14.5 Z" fill="#bdbdbd"/></svg>
<svg class="a" style="left:499px;top:108px;" width="17" height="17" viewBox="0 0 17 17"><circle cx="6.5" cy="10" r="6" fill="#bdbdbd" stroke="#9c9c9c" stroke-width="0.9"/><rect x="5" y="1" width="10.5" height="9.5" fill="#d4d4d4" stroke="#9c9c9c" stroke-width="0.9"/><path d="M5 4.3 A6 6 0 0 1 12.2 10.5" fill="none" stroke="#9c9c9c" stroke-width="0.7"/></svg>
<svg class="a" style="left:583px;top:64px;" width="17" height="17" viewBox="0 0 17 17"><path d="M0.8 5 L5 0.8 L16 0.8 L16 11 L11.5 15.5 L0.8 15.5 Z" fill="#d4d4d4" stroke="#9c9c9c" stroke-width="0.9"/><path d="M0.8 5 L11.5 5 L16 0.8 M11.5 5 L11.5 15.5" fill="none" stroke="#9c9c9c" stroke-width="0.8"/><path d="M0.8 10.5 C4 8 7 12 11.5 9.5 L16 6" fill="none" stroke="#8a8a8a" stroke-width="1.1"/><path d="M1.2 5.4 L11 5.4 L15 1.4 L5.2 1.4 Z" fill="#efefef"/></svg>
<svg class="a" style="left:583px;top:86px;" width="17" height="17" viewBox="0 0 17 17"><path d="M0.8 0.8 L6 0.8 L6 15.5 L0.8 15.5 Z" fill="#e8e8e8" stroke="#9c9c9c" stroke-width="0.9"/><path d="M6 0.8 L10.5 0.8 L15.5 15.5 L6 15.5 Z" fill="#d4d4d4" stroke="#9c9c9c" stroke-width="0.9" stroke-dasharray="2 1"/><path d="M4 11.5 L11 11.5 M9 9.5 L11.5 11.5 L9 13.5" fill="none" stroke="#9c9c9c" stroke-width="1"/></svg>
<svg class="a" style="left:583px;top:108px;" width="17" height="17" viewBox="0 0 17 17"><path d="M0.8 4 L3.5 1 L10.5 1 L10.5 8 L8 10.5 L0.8 10.5 Z" fill="#f6f6f6" stroke="#9c9c9c" stroke-width="0.9"/><path d="M0.8 4 L8 4 L8 10.5 M8 4 L10.5 1" fill="none" stroke="#9c9c9c" stroke-width="0.8"/><path d="M8.5 9.5 L15.5 16 M15.5 9.5 L8.5 16" stroke="#b0b0b0" stroke-width="1.8"/></svg>
<svg class="a" style="left:726px;top:64px;" width="17" height="17" viewBox="0 0 17 17"><path d="M0.8 15.5 L0.8 7 L4.5 1 L7 1 L9 8 L15.5 10 L15.5 12.5 L11 15.5 Z" fill="#bdbdbd" stroke="#9c9c9c" stroke-width="0.9"/><path d="M4.5 3 L5.5 9.5 L12 11.5 L5.5 11.5 Z" fill="#ececec" stroke="#9c9c9c" stroke-width="0.7"/></svg>
<svg class="a" style="left:726px;top:86px;" width="17" height="17" viewBox="0 0 17 17"><path d="M1 5.5 L6 1 L15.5 8 L10 12.5 Z" fill="#f6f6f6" stroke="#9c9c9c" stroke-width="0.9"/><path d="M8 4 L12 7.5 L9 10 M5 9 L9 12.5" fill="none" stroke="#9c9c9c" stroke-width="0.9"/><circle cx="7.5" cy="14" r="1.8" fill="none" stroke="#9c9c9c" stroke-width="1"/><circle cx="13" cy="14" r="1.8" fill="none" stroke="#9c9c9c" stroke-width="1"/></svg>
<svg class="a" style="left:726px;top:108px;" width="17" height="17" viewBox="0 0 17 17"><path d="M0.8 0.8 L11 0.8 L15.5 5 L15.5 15.8 L0.8 15.8 Z" fill="#d4d4d4" stroke="#9c9c9c" stroke-width="0.9"/><path d="M2 15 C3 9 5 5 8 4.5 C11 5 12 9 12.5 15" fill="none" stroke="#efefef" stroke-width="2.2"/><path d="M6 6 C9 7 10 11 10 15" fill="none" stroke="#a5a5a5" stroke-width="1.6"/></svg>
<svg class="a" style="left:856px;top:64px;" width="17" height="17" viewBox="0 0 17 17"><rect x="0.8" y="0.8" width="14.8" height="14.8" fill="#d4d4d4" stroke="#9c9c9c" stroke-width="0.9"/><rect x="2" y="8" width="6" height="6" fill="#efefef" stroke="#9c9c9c" stroke-width="0.9"/><path d="M2.5 2.5 L13.5 2.5 L13.5 13.5" fill="none" stroke="#c4c4c4" stroke-width="0.8"/></svg>
<svg class="a" style="left:856px;top:86px;" width="17" height="17" viewBox="0 0 17 17"><path d="M0.8 4 L3 1.5 L11 1.5 L11 9 L8.5 11.5 L0.8 11.5 Z" fill="#d4d4d4" stroke="#9c9c9c" stroke-width="0.9"/><path d="M0.8 4 L8.5 4 L11 1.5" fill="none" stroke="#9c9c9c" stroke-width="0.8"/><rect x="6" y="7.5" width="8.5" height="8" fill="#e4e4e4" stroke="#9c9c9c" stroke-width="0.9"/><path d="M12.5 1 L15.5 1 L15.5 4" fill="none" stroke="#9c9c9c" stroke-width="0.9" stroke-dasharray="1.5 1"/></svg>
<svg class="a" style="left:856px;top:108px;" width="17" height="17" viewBox="0 0 17 17"><path d="M8.3 0.5 L8.3 16.5" stroke="#9c9c9c" stroke-width="1.1"/><path d="M6 2 L6 14 L2.5 14 C1 13 1 11 1.2 9 L1.2 5.5 C3 5 4.5 3.5 6 2 Z" fill="#f4f4f4" stroke="#9c9c9c" stroke-width="1"/><path d="M10.5 2 L10.5 14 L13.5 14 C15.5 12 15.5 5 13.5 3 Z" fill="#d4d4d4" stroke="#9c9c9c" stroke-width="1"/></svg>
<svg class="a" style="left:977px;top:64px;" width="17" height="17" viewBox="0 0 17 17"><path d="M0.8 3.5 L3 1 L10 1 L10 7 L7.5 9.5 L0.8 9.5 Z" fill="#d4d4d4" stroke="#9c9c9c" stroke-width="0.9"/><path d="M0.8 3.5 L7.5 3.5 L7.5 9.5 M7.5 3.5 L10 1" fill="none" stroke="#9c9c9c" stroke-width="0.8"/><path d="M12 7.5 L12 16 M7.8 11.8 L16.2 11.8" stroke="#9c9c9c" stroke-width="1"/><path d="M12 7 L10.6 9 L13.4 9 Z M12 16.5 L10.6 14.5 L13.4 14.5 Z M7.3 11.8 L9.3 10.4 L9.3 13.2 Z M16.7 11.8 L14.7 10.4 L14.7 13.2 Z" fill="#9c9c9c"/></svg>
<svg class="a" style="left:977px;top:86px;" width="17" height="17" viewBox="0 0 17 17"><path d="M5 1 L16 1 L11.5 5 L0.8 5 Z" fill="#d0d0d0" stroke="#8a8a8a" stroke-width="0.9"/><path d="M5 11.5 L16 11.5 L11.5 15.5 L0.8 15.5 Z" fill="#f2f2f2" stroke="#8a8a8a" stroke-width="0.9"/><path d="M2.5 5.3 L13.5 5.3 L4.5 11.3" fill="none" stroke="#8a8a8a" stroke-width="1.2"/><path d="M8 6.5 L8 10 M6.5 8.5 L8 10.3 L9.5 8.5" fill="none" stroke="#8a8a8a" stroke-width="0.9"/></svg>
<svg class="a" style="left:977px;top:108px;" width="17" height="17" viewBox="0 0 17 17"><path d="M5 1 L16 1 L11.5 5 L0.8 5 Z" fill="#d0d0d0" stroke="#8a8a8a" stroke-width="0.9"/><path d="M5 11.5 L16 11.5 L11.5 15.5 L0.8 15.5 Z" fill="#f2f2f2" stroke="#8a8a8a" stroke-width="0.9"/><path d="M2.5 5.3 L13.5 5.3 L4.5 11.3" fill="none" stroke="#8a8a8a" stroke-width="1.2"/><path d="M8 6.5 L8 10 M6.5 8.5 L8 10.3 L9.5 8.5" fill="none" stroke="#8a8a8a" stroke-width="0.9"/></svg>
<svg class="a" style="left:1064px;top:64px;" width="17" height="17" viewBox="0 0 17 17"><path d="M0.8 6 L5 1.5 L15.5 1.5 L15.5 11 L11.5 15.5 L0.8 15.5 Z" fill="#d4d4d4" stroke="#9c9c9c" stroke-width="0.9"/><path d="M0.8 6 L11.5 6 L11.5 15.5 M11.5 6 L15.5 1.5" fill="none" stroke="#9c9c9c" stroke-width="0.8"/><path d="M3 5.5 L6 2.5 L8 4 L10 2 L12 3.5 L13.5 2 L14.5 2.5 L11.5 5.5 Z" fill="#fafafa"/><path d="M11 4 L16 0.5 M12 0.5 L15.5 4" stroke="#9c9c9c" stroke-width="0.9"/></svg>
<svg class="a" style="left:1064px;top:86px;" width="17" height="17" viewBox="0 0 17 17"><ellipse cx="8.3" cy="3.5" rx="7.3" ry="2.6" fill="#f4f4f4" stroke="#8a8a8a" stroke-width="0.9"/><path d="M1 3.5 L1 12.5 C2 16.3 14.5 16.3 15.6 12.5 L15.6 3.5" fill="none" stroke="#8a8a8a" stroke-width="0.9"/><path d="M4.5 6 L4.5 15 M12 6 L12 15" stroke="#8a8a8a" stroke-width="0.7"/><circle cx="8.5" cy="9.5" r="3" fill="#e0e0e0" stroke="#8a8a8a" stroke-width="1"/><path d="M8.5 9.5 L11 6.5" stroke="#8a8a8a" stroke-width="0.9"/></svg>
<svg class="a" style="left:1064px;top:108px;" width="17" height="17" viewBox="0 0 17 17"><path d="M0.8 8 L8 2 L15.5 8 L8 14 Z" fill="#f6f6f6" stroke="#9c9c9c" stroke-width="0.9"/><path d="M1 16 L12.5 5.5" stroke="#9c9c9c" stroke-width="0.9"/><path d="M9 2.5 L12.5 1 L13 4.5" fill="none" stroke="#9c9c9c" stroke-width="0.9" stroke-dasharray="1.5 1"/></svg>
<div class="a" style="left:0px;top:155px;width:549px;height:30px;background:#f2f2f2;"></div>
<div class="a" style="left:78px;top:158.5px;width:146px;height:23px;background:#e5e5e5;"></div>
<div class="a" style="left:82.3px;top:163.2px;font-size:12px;line-height:14px;color:#1e1e1e;letter-spacing:-0.047px;">Default</div>
<div class="a" style="left:228px;top:158.5px;width:146px;height:23px;background:#fff;border:1px solid #d2d2d2;box-sizing:border-box;"></div>
<div class="a" style="left:232.3px;top:163.2px;font-size:12px;line-height:14px;color:#1e1e1e;letter-spacing:-0.439px;">Face/Edge/Vertex (FEV)</div>
<div class="a" style="left:378px;top:158.5px;width:146px;height:23px;background:#fff;border:1px solid #d2d2d2;box-sizing:border-box;"></div>
<div class="a" style="left:382.3px;top:163.2px;font-size:12px;line-height:14px;color:#1e1e1e;letter-spacing:-0.047px;">Default</div>
<svg class="a" style="left:214px;top:168.8px;" width="6" height="4" viewBox="0 0 6 4"><path d="M0.2 0.3 L5.2 0.3 L2.7 3.3 Z" fill="#c8c8c8"/></svg>
<svg class="a" style="left:364px;top:168.8px;" width="6" height="4" viewBox="0 0 6 4"><path d="M0.2 0.3 L5.2 0.3 L2.7 3.3 Z" fill="#555"/></svg>
<svg class="a" style="left:514px;top:168.8px;" width="6" height="4" viewBox="0 0 6 4"><path d="M0.2 0.3 L5.2 0.3 L2.7 3.3 Z" fill="#555"/></svg>
<div class="a" style="left:60px;top:189.7px;font-size:12px;line-height:14px;color:#3a3a3a;letter-spacing:-0.439px;">Scene1*</div>
<div class="a" style="left:132px;top:189.7px;font-size:12px;line-height:14px;color:#3a3a3a;letter-spacing:-0.482px;">Scene2*</div>
<div class="a" style="left:202px;top:189.7px;font-size:12px;line-height:14px;color:#3a3a3a;letter-spacing:-0.501px;">shapes</div>
<div class="a" style="left:267.3px;top:189.7px;font-size:12px;line-height:14px;color:#3a3a3a;letter-spacing:-0.482px;">Scene7*</div>
<svg class="a" style="left:26px;top:186px;" width="400" height="22" viewBox="0 0 400 22"><path d="M0 21.5 L21 1.5 L88.5 1.5 L88.5 21.5 M88.5 3 L90.5 1.5 L160.5 1.5 L160.5 21.5 M160.5 3 L162.5 1.5 L223.5 1.5 L223.5 21.5 M223.5 3 L225.5 1.5 L296 1.5 L292 5" fill="none" stroke="#c9c9c9" stroke-width="1"/><path d="M281 22 L300 1.5 L387.5 1.5 L387.5 22 Z" fill="#fff" stroke="#cfcfcf" stroke-width="1"/></svg>
<div class="a" style="left:340px;top:189.7px;font-size:12px;line-height:14px;color:#3a3a3a;font-weight:bold;letter-spacing:-0.143px;">Scene8*</div>
<svg class="a" style="left:398px;top:192px;" width="10" height="10" viewBox="0 0 10 10"><path d="M1.5 1.5 L8.5 8.5 M8.5 1.5 L1.5 8.5" stroke="#444" stroke-width="1.2"/></svg>
<svg class="a" style="left:1905px;top:194px;" width="10" height="6" viewBox="0 0 10 6"><path d="M0.5 0.5 L9.5 0.5 L5 5.5 Z" fill="#555"/></svg>
<div class="a" style="left:26px;top:208px;width:304px;height:24px;background:#e6e6e6;"></div>
<div class="a" style="left:30.4px;top:211.8px;font-size:12px;line-height:14px;color:#3a3a3a;letter-spacing:-0.210px;">Properties</div>
<div class="a" style="left:26px;top:232px;width:304px;height:25px;background:#f0f0f0;"></div>
<div class="a" style="left:26px;top:257px;width:304px;height:705px;background:#fdfdfd;"></div>
<div class="a" style="left:330px;top:208px;width:6px;height:776px;background:#e0e0e0;"></div>
<div class="a" style="left:54.3px;top:263.1px;font-size:12px;line-height:14px;color:#ee0012;font-weight:bold;letter-spacing:-0.217px;">Blend Feature</div>
<div class="a" style="left:54.3px;top:286.8px;font-size:12px;line-height:14px;color:#3a3a3a;font-weight:bold;letter-spacing:-0.310px;">Blend Type</div>
<div class="a" style="left:32.3px;top:304.6px;width:10.3px;height:10.3px;border:1.1px solid #2a2a2a;border-radius:50%;background:#fff;box-sizing:content-box"></div>
<div class="a" style="left:35.5px;top:307.7px;width:6.2px;height:6.2px;border-radius:50%;background:#2a2a2a"></div>
<div class="a" style="left:50.6px;top:303.8px;font-size:12px;line-height:14px;color:#1e1e1e;letter-spacing:-0.129px;">Constant</div>
<div class="a" style="left:32.3px;top:325.6px;width:10.3px;height:10.3px;border:1.1px solid #2a2a2a;border-radius:50%;background:#fff;box-sizing:content-box"></div>
<div class="a" style="left:50.6px;top:324.75px;font-size:12px;line-height:14px;color:#1e1e1e;letter-spacing:-0.150px;">Two Points</div>
<div class="a" style="left:32.3px;top:346.5px;width:10.3px;height:10.3px;border:1.1px solid #2a2a2a;border-radius:50%;background:#fff;box-sizing:content-box"></div>
<div class="a" style="left:50.6px;top:345.7px;font-size:12px;line-height:14px;color:#1e1e1e;letter-spacing:-0.318px;">Variable</div>
<div class="a" style="left:32.3px;top:367.4px;width:10.3px;height:10.3px;border:1.1px solid #2a2a2a;border-radius:50%;background:#fff;box-sizing:content-box"></div>
<div class="a" style="left:50.6px;top:366.65px;font-size:12px;line-height:14px;color:#1e1e1e;letter-spacing:-0.251px;">Constant Face Blend</div>
<div class="a" style="left:32.3px;top:388.4px;width:10.3px;height:10.3px;border:1.1px solid #2a2a2a;border-radius:50%;background:#fff;box-sizing:content-box"></div>
<div class="a" style="left:50.6px;top:387.6px;font-size:12px;line-height:14px;color:#1e1e1e;letter-spacing:-0.040px;">Holdlines</div>
<div class="a" style="left:32.3px;top:409.4px;width:10.3px;height:10.3px;border:1.1px solid #2a2a2a;border-radius:50%;background:#fff;box-sizing:content-box"></div>
<div class="a" style="left:50.6px;top:408.55px;font-size:12px;line-height:14px;color:#1e1e1e;letter-spacing:-0.203px;">Full Round</div>
<div class="a" style="left:54.3px;top:436.4px;font-size:12px;line-height:14px;color:#3a3a3a;font-weight:bold;letter-spacing:-0.169px;">Parameters</div>
<div class="a" style="left:32px;top:453.5px;width:292px;height:57px;background:#f3f5fb;border:1px solid #d4d4d4;border-right:2px solid #6a6a6a;border-bottom:2px solid #6a6a6a;box-sizing:border-box;"></div>
<div class="a" style="left:39px;top:460px;width:96px;height:44px;background:#fff;"></div>
<div class="a" style="left:39.4px;top:477.5px;font-size:12px;line-height:14px;color:#ee0012;letter-spacing:-0.173px;">Geometry</div>
<div class="a" style="left:134px;top:460px;width:184px;height:44.5px;background:#fff;border-top:1px solid #6a6a6a;border-left:1px solid #6a6a6a;box-sizing:border-box;overflow:hidden;"></div>
<div class="a" style="left:137.5px;top:462px;font-size:11.6px;line-height:14px;color:#1e1e1e;letter-spacing:0.015px;clip-path:inset(0 0 0px 0);">Part2\Edge&lt;6&gt;</div>
<div class="a" style="left:137.5px;top:477px;font-size:11.6px;line-height:14px;color:#1e1e1e;letter-spacing:0.015px;clip-path:inset(0 0 0px 0);">Part2\Edge&lt;8&gt;</div>
<div class="a" style="left:137.5px;top:492px;font-size:11.6px;line-height:14px;color:#1e1e1e;letter-spacing:0.008px;clip-path:inset(0 0 2px 0);">Part2\Edge&lt;11&gt;</div>
<div class="a" style="left:306px;top:461px;width:12px;height:43px;background:#f1f1f1;"></div>
<svg class="a" style="left:308px;top:466.3px;" width="11" height="7" viewBox="0 0 11 7"><path d="M1.5 5.5 L5.5 1.5 L9.5 5.5" fill="none" stroke="#444" stroke-width="1.5"/></svg>
<svg class="a" style="left:308px;top:497.3px;" width="11" height="7" viewBox="0 0 11 7"><path d="M1.5 1.5 L5.5 5.5 L9.5 1.5" fill="none" stroke="#444" stroke-width="1.5"/></svg>
<div class="a" style="left:32.4px;top:520.2px;font-size:12px;line-height:14px;color:#1e1e1e;letter-spacing:-0.510px;">Radius</div>
<div class="a" style="left:127px;top:517.5px;width:197px;height:19px;background:#fff;border:1px solid #5a5a5a;box-sizing:border-box;"></div>
<div class="a" style="left:132.5px;top:519.5px;font-size:11.6px;line-height:14px;color:#1e1e1e;letter-spacing:-0.703px;">10</div>
<div class="a" style="left:32.4px;top:554.5px;width:10.2px;height:10.2px;border:1.1px solid #2a2a2a;background:#fff;box-sizing:content-box"></div>
<div class="a" style="left:50.6px;top:553.5px;font-size:12px;line-height:14px;color:#1e1e1e;letter-spacing:-0.294px;">Spheric Blend</div>
<div class="a" style="left:54.3px;top:585.3px;font-size:12px;line-height:14px;color:#3a3a3a;font-weight:bold;letter-spacing:-0.332px;">Advance Options</div>
<div class="a" style="left:32.4px;top:603.5px;width:10.2px;height:10.2px;border:1.1px solid #2a2a2a;background:#fff;box-sizing:content-box"></div>
<svg class="a" style="left:33px;top:604.0px;" width="12" height="12" viewBox="0 0 12 12"><path d="M1.8 5.8 L4.6 8.8 L10 2.2" fill="none" stroke="#222" stroke-width="1.3"/></svg>
<div class="a" style="left:50.6px;top:602.5px;font-size:12px;line-height:14px;color:#1e1e1e;letter-spacing:-0.058px;">Smooth Connected</div>
<div class="a" style="left:32.4px;top:624.5px;width:10.2px;height:10.2px;border:1.1px solid #c4c4c4;background:#fff;box-sizing:content-box"></div>
<div class="a" style="left:50.6px;top:623.5px;font-size:12px;line-height:14px;color:#8c8c8c;letter-spacing:-0.304px;">Toggle Radius Values</div>
<div class="a" style="left:32.4px;top:645.5px;width:10.2px;height:10.2px;border:1.1px solid #2a2a2a;background:#fff;box-sizing:content-box"></div>
<div class="a" style="left:50.6px;top:644.5px;font-size:12px;line-height:14px;color:#1e1e1e;letter-spacing:-0.302px;">Select Edges from Face Selection</div>
<svg class="a" style="left:37px;top:265px;" width="8" height="9" viewBox="0 0 8 9"><path d="M1 0.8 L6.5 4.2 L1 7.8 Z" fill="#fff" stroke="#9a9a9a" stroke-width="0.9"/></svg>
<svg class="a" style="left:37px;top:290px;" width="8" height="7" viewBox="0 0 8 7"><path d="M1 6 L6 6 L6 1 Z" fill="#b5b5b5"/></svg>
<svg class="a" style="left:37px;top:440px;" width="8" height="7" viewBox="0 0 8 7"><path d="M1 6 L6 6 L6 1 Z" fill="#b5b5b5"/></svg>
<svg class="a" style="left:37px;top:589px;" width="8" height="7" viewBox="0 0 8 7"><path d="M1 6 L6 6 L6 1 Z" fill="#b5b5b5"/></svg>
<svg class="a" style="left:276px;top:217.5px;" width="12" height="7" viewBox="0 0 12 7"><path d="M0.5 0.5 L10.5 0.5 L5.5 6 Z" fill="#555"/></svg>
<svg class="a" style="left:295px;top:213px;" width="10" height="12" viewBox="0 0 10 12"><path d="M3 1 L7.5 1 M3.5 1 L3.5 6 M7 1 L7 6 M1.5 6.2 L8.8 6.2 M5.2 6.2 L5.2 11" stroke="#555" stroke-width="1.1" fill="none"/></svg>
<svg class="a" style="left:314px;top:214px;" width="10" height="10" viewBox="0 0 10 10"><path d="M1.5 1.5 L8.5 8.5 M8.5 1.5 L1.5 8.5" stroke="#444" stroke-width="1.2"/></svg>
<svg class="a" style="left:30px;top:236px;" width="17" height="17" viewBox="0 0 17 17"><path d="M1 8.5 L3.5 6.8 L6.8 10.8 C9 6.5 12 3.5 15.8 1.5 L16.3 2.5 C12.5 6 9.5 10.5 7.5 15 L5.8 15 C4.5 12.5 3 10.3 1 8.5 Z" fill="#0fa30f"/></svg>
<svg class="a" style="left:53px;top:236px;" width="16" height="16" viewBox="0 0 16 16"><path d="M2 2.5 L13 14 M13.5 2 L2 14" stroke="#d62222" stroke-width="1.9" stroke-linecap="round"/></svg>
<div class="a" style="left:73px;top:234px;width:19px;height:20px;background:#dcdcdc;"></div>
<svg class="a" style="left:74px;top:236px;" width="18" height="17" viewBox="0 0 18 17"><ellipse cx="3.9" cy="8.6" rx="2.3" ry="3.1" fill="#bfe4fb" stroke="#1c2a38" stroke-width="1.3"/><ellipse cx="10.9" cy="10.5" rx="2.6" ry="3.3" fill="#bfe4fb" stroke="#1c2a38" stroke-width="1.3"/><path d="M3.3 5.4 L6.2 0.6 L7.6 2.6 M13.2 6.6 L15.5 3.2 L16.6 6.4 M6 6.6 L8.6 7.6" fill="none" stroke="#2a2a2a" stroke-width="1.1"/></svg>
<svg class="a" style="left:98px;top:237px;" width="14" height="14" viewBox="0 0 14 14"><circle cx="7" cy="7" r="6.3" fill="#0808c8"/><path d="M7 0.7 A6.3 6.3 0 0 1 7 13.3 Z" fill="#05058a"/></svg>
<div class="a" style="left:86.5px;top:961px;width:80px;height:23px;background:#fbfbfb;border:1px solid #cfcfcf;border-top:none;box-sizing:border-box;"></div>
<div class="a" style="left:47.8px;top:966px;font-size:12px;line-height:14px;color:#3a3a3a;letter-spacing:-0.566px;">Scene</div>
<div class="a" style="left:107.7px;top:965.5px;font-size:12px;line-height:14px;color:#3a3a3a;letter-spacing:-0.170px;">Properties</div>
<div class="a" style="left:190px;top:966px;font-size:12px;line-height:14px;color:#3a3a3a;letter-spacing:-0.622px;">Search</div>
<div class="a" style="left:25px;top:991px;font-size:12px;line-height:14px;color:#3a3a3a;letter-spacing:-0.201px;">Catalog Browser</div>
<div class="a" style="left:7px;top:1009px;width:104px;height:5px;background:#d4d4d4;"></div>
<div class="a" style="left:0px;top:368px;width:25.5px;height:595px;background:#f0f0f0;"></div>
<div class="a" style="left:5px;top:373px;width:2px;height:2px;background:#9a9a9a;"></div>
<div class="a" style="left:9px;top:373px;width:2px;height:2px;background:#9a9a9a;"></div>
<div class="a" style="left:13px;top:373px;width:2px;height:2px;background:#9a9a9a;"></div>
<div class="a" style="left:17px;top:373px;width:2px;height:2px;background:#9a9a9a;"></div>
<svg class="a" style="left:4px;top:384px;" width="18" height="14" viewBox="0 0 18 14"><rect x="6.5" y="3.5" width="9" height="9" fill="#c6c6c6" stroke="#a9a9a9" stroke-width="0.9"/><path d="M8.5 1.5 L17 1.5 L17 10 M0.5 6 L6 6 M3 3.5 L3 8.5" fill="none" stroke="#a9a9a9" stroke-width="0.9"/></svg>
<svg class="a" style="left:4px;top:404px;" width="18" height="17" viewBox="0 0 18 17"><circle cx="7.5" cy="10" r="6" fill="#c6c6c6" stroke="#a9a9a9" stroke-width="0.9"/><rect x="5.5" y="1.5" width="11" height="10" fill="#c6c6c6" stroke="#a9a9a9" stroke-width="0.9"/><path d="M5.5 6 L16.5 6 M11 1.5 L11 11.5 M1.5 10 L13.5 10 M7.5 4 L7.5 16" stroke="#a9a9a9" stroke-width="0.6"/></svg>
<div class="a" style="left:0px;top:428px;width:25px;height:1px;background:#d8d8d8;"></div>
<svg class="a" style="left:4px;top:434px;" width="18" height="17" viewBox="0 0 18 17"><circle cx="7.5" cy="10" r="6" fill="#c6c6c6" stroke="#a9a9a9" stroke-width="0.9"/><rect x="5.5" y="1.5" width="11" height="10" fill="#c6c6c6" stroke="#a9a9a9" stroke-width="0.9"/></svg>
<svg class="a" style="left:4px;top:456px;" width="18" height="17" viewBox="0 0 18 17"><circle cx="7.5" cy="10" r="6" fill="#c6c6c6" stroke="#a9a9a9" stroke-width="0.9"/><rect x="5.5" y="1.5" width="11" height="10" fill="#c6c6c6" stroke="#a9a9a9" stroke-width="0.9"/><path d="M5.5 4.4 A6 6 0 0 1 13.2 11.5 L5.5 11.5 Z" fill="#dedede" stroke="#a9a9a9" stroke-width="0.7"/></svg>
<svg class="a" style="left:4px;top:476px;" width="18" height="17" viewBox="0 0 18 17"><circle cx="7.5" cy="10" r="6" fill="#c6c6c6" stroke="#a9a9a9" stroke-width="0.9"/><rect x="5.5" y="1.5" width="11" height="10" fill="#fafafa" stroke="#a9a9a9" stroke-width="0.9"/></svg>
<svg class="a" style="left:6px;top:499px;" width="5" height="8" viewBox="0 0 5 8"><path d="M4.5 0.5 L4.5 7.5 L0.5 4 Z" fill="#555"/></svg>
<div class="a" style="left:5px;top:514px;width:2px;height:2px;background:#9a9a9a;"></div>
<div class="a" style="left:9px;top:514px;width:2px;height:2px;background:#9a9a9a;"></div>
<div class="a" style="left:13px;top:514px;width:2px;height:2px;background:#9a9a9a;"></div>
<div class="a" style="left:17px;top:514px;width:2px;height:2px;background:#9a9a9a;"></div>
<svg class="a" style="left:4.5px;top:523px;" width="17" height="17" viewBox="0 0 17 17"><path d="M0.7 5.5 L11.5 5.5 L11.5 16 L0.7 16 Z" fill="#2f62a3" stroke="#1f4b86" stroke-width="1"/><path d="M0.7 5.5 L5.5 0.7 L16.3 0.7 L11.5 5.5 Z" fill="#d3e3f6" stroke="#1f4b86" stroke-width="1"/><path d="M11.5 5.5 L16.3 0.7 L16.3 11 L11.5 16 Z" fill="#d3e3f6" stroke="#1f4b86" stroke-width="1"/></svg>
<svg class="a" style="left:4.5px;top:545.5px;" width="17" height="17" viewBox="0 0 17 17"><path d="M0.7 5.5 L11.5 5.5 L11.5 16 L0.7 16 Z" fill="#eaf2fc" stroke="#1f4b86" stroke-width="1"/><path d="M0.7 5.5 L5.5 0.7 L16.3 0.7 L11.5 5.5 Z" fill="#2f62a3" stroke="#1f4b86" stroke-width="1"/><path d="M11.5 5.5 L16.3 0.7 L16.3 11 L11.5 16 Z" fill="#d3e3f6" stroke="#1f4b86" stroke-width="1"/><path d="M5.5 0.7 L5.5 11 L16.3 11 M5.5 11 L0.7 16" fill="none" stroke="#8fb3de" stroke-width="0.8"/></svg>
<svg class="a" style="left:4.5px;top:568px;" width="17" height="17" viewBox="0 0 17 17"><path d="M0.7 5.5 L11.5 5.5 L11.5 16 L0.7 16 Z" fill="#eaf2fc" stroke="#1f4b86" stroke-width="1"/><path d="M0.7 5.5 L5.5 0.7 L16.3 0.7 L11.5 5.5 Z" fill="#d3e3f6" stroke="#1f4b86" stroke-width="1"/><path d="M11.5 5.5 L16.3 0.7 L16.3 11 L11.5 16 Z" fill="#d3e3f6" stroke="#1f4b86" stroke-width="1"/><path d="M0.7 5.5 L5.5 0.7 L5.5 11 L0.7 16 Z" fill="#2f62a3" stroke="#1f4b86" stroke-width="0.8"/><path d="M5.5 0.7 L5.5 11 L16.3 11 M5.5 11 L0.7 16" fill="none" stroke="#8fb3de" stroke-width="0.8"/></svg>
<svg class="a" style="left:4.5px;top:590px;" width="17" height="17" viewBox="0 0 17 17"><path d="M0.7 5.5 L11.5 5.5 L11.5 16 L0.7 16 Z" fill="#eaf2fc" stroke="#1f4b86" stroke-width="1"/><path d="M0.7 5.5 L5.5 0.7 L16.3 0.7 L11.5 5.5 Z" fill="#d3e3f6" stroke="#1f4b86" stroke-width="1"/><path d="M11.5 5.5 L16.3 0.7 L16.3 11 L11.5 16 Z" fill="#2f62a3" stroke="#1f4b86" stroke-width="1"/><path d="M5.5 0.7 L5.5 11 L16.3 11 M5.5 11 L0.7 16" fill="none" stroke="#8fb3de" stroke-width="0.8"/></svg>
<svg class="a" style="left:4.5px;top:612px;" width="17" height="17" viewBox="0 0 17 17"><path d="M0.7 5.5 L11.5 5.5 L11.5 16 L0.7 16 Z" fill="#eaf2fc" stroke="#1f4b86" stroke-width="1"/><path d="M0.7 5.5 L5.5 0.7 L16.3 0.7 L11.5 5.5 Z" fill="#d3e3f6" stroke="#1f4b86" stroke-width="1"/><path d="M11.5 5.5 L16.3 0.7 L16.3 11 L11.5 16 Z" fill="#d3e3f6" stroke="#1f4b86" stroke-width="1"/><path d="M5.5 0.7 L16.3 0.7 L16.3 11 L5.5 11 Z" fill="#2f62a3"/><path d="M5.5 0.7 L5.5 11 L16.3 11 M5.5 11 L0.7 16" fill="none" stroke="#8fb3de" stroke-width="0.8"/></svg>
<svg class="a" style="left:4.5px;top:634px;" width="17" height="17" viewBox="0 0 17 17"><path d="M0.7 5.5 L11.5 5.5 L11.5 16 L0.7 16 Z" fill="#eaf2fc" stroke="#1f4b86" stroke-width="1"/><path d="M0.7 5.5 L5.5 0.7 L16.3 0.7 L11.5 5.5 Z" fill="#d3e3f6" stroke="#1f4b86" stroke-width="1"/><path d="M11.5 5.5 L16.3 0.7 L16.3 11 L11.5 16 Z" fill="#d3e3f6" stroke="#1f4b86" stroke-width="1"/><path d="M0.7 16 L5.5 11 L16.3 11 L11.5 16 Z" fill="#2f62a3" stroke="#1f4b86" stroke-width="0.8"/><path d="M5.5 0.7 L5.5 11 L16.3 11 M5.5 11 L0.7 16" fill="none" stroke="#8fb3de" stroke-width="0.8"/></svg>
<svg class="a" style="left:7px;top:657px;" width="13" height="15" viewBox="0 0 13 15"><path d="M0.7 3.5 L4 0.7 L12.3 3.5 L12.3 12.5 L8.5 14.3 L0.7 10.5 Z" fill="#2f62a3" stroke="#1f4b86" stroke-width="0.9"/><path d="M0.7 3.5 L8.5 6 L12.3 3.5 M8.5 6 L8.5 14.3" fill="none" stroke="#8fb3de" stroke-width="0.8"/></svg>
<svg class="a" style="left:7px;top:679.5px;" width="13" height="15" viewBox="0 0 13 15"><path d="M0.7 3.5 L4 0.7 L12.3 3.5 L12.3 12.5 L8.5 14.3 L0.7 10.5 Z" fill="#2f62a3" stroke="#1f4b86" stroke-width="0.9"/><path d="M0.7 3.5 L8.5 6 L12.3 3.5 M8.5 6 L8.5 14.3" fill="none" stroke="#8fb3de" stroke-width="0.8"/><path d="M0.7 3.5 L4 0.7 L4 8 L0.7 10.5 Z" fill="#fff" stroke="#1f4b86" stroke-width="0.8"/></svg>
<svg class="a" style="left:7px;top:701.5px;" width="13" height="15" viewBox="0 0 13 15"><path d="M0.7 3.5 L4 0.7 L12.3 3.5 L12.3 12.5 L8.5 14.3 L0.7 10.5 Z" fill="#2f62a3" stroke="#1f4b86" stroke-width="0.9"/><path d="M0.7 3.5 L8.5 6 L12.3 3.5 M8.5 6 L8.5 14.3" fill="none" stroke="#8fb3de" stroke-width="0.8"/><path d="M0.7 3.5 L4 0.7 L12.3 3.5 L8.5 6 Z" fill="#fff" stroke="#1f4b86" stroke-width="0.8"/></svg>
<svg class="a" style="left:7px;top:723px;" width="13" height="15" viewBox="0 0 13 15"><path d="M0.7 3.5 L4 0.7 L12.3 3.5 L12.3 12.5 L8.5 14.3 L0.7 10.5 Z" fill="#2f62a3" stroke="#1f4b86" stroke-width="0.9"/><path d="M0.7 3.5 L8.5 6 L12.3 3.5 M8.5 6 L8.5 14.3" fill="none" stroke="#8fb3de" stroke-width="0.8"/><path d="M0.7 3.5 L4 0.7 L12.3 3.5 L8.5 6 Z" fill="#fff" stroke="#1f4b86" stroke-width="0.8"/><path d="M0.7 3.5 L8.5 6 L8.5 9 L0.7 10.5 Z" fill="#fff" stroke="#1f4b86" stroke-width="0.8"/></svg>
<svg class="a" style="left:6px;top:741px;" width="5" height="8" viewBox="0 0 5 8"><path d="M4.5 0.5 L4.5 7.5 L0.5 4 Z" fill="#555"/></svg>
<div class="a" style="left:5px;top:757px;width:2px;height:2px;background:#9a9a9a;"></div>
<div class="a" style="left:9px;top:757px;width:2px;height:2px;background:#9a9a9a;"></div>
<div class="a" style="left:13px;top:757px;width:2px;height:2px;background:#9a9a9a;"></div>
<div class="a" style="left:17px;top:757px;width:2px;height:2px;background:#9a9a9a;"></div>
<svg class="a" style="left:4px;top:766px;" width="18" height="17" viewBox="0 0 18 17"><path d="M2.5 3.5 L15.5 12.5" stroke="#222" stroke-width="1.1"/><path d="M0.5 6.5 L5 0.8 M13 15.5 L17.5 9.5" stroke="#222" stroke-width="0.9"/><path d="M2.5 3.5 L6 4.2 L4.5 6.2 Z M15.5 12.5 L12 11.8 L13.5 9.8 Z" fill="#222"/></svg>
<svg class="a" style="left:4px;top:788px;" width="18" height="17" viewBox="0 0 18 17"><path d="M1 1 L1 9 M16.5 1 L16.5 9 M1 5 L16.5 5" stroke="#e01818" stroke-width="1.3"/><path d="M1.5 5 L5 3 L5 7 Z M16 5 L12.5 3 L12.5 7 Z" fill="#e01818"/><ellipse cx="9" cy="11.5" rx="5" ry="3.2" fill="#2a6fd0" stroke="#1a4a90" stroke-width="0.8"/><ellipse cx="9" cy="11.3" rx="2" ry="1.6" fill="#bfe0ff"/></svg>
<svg class="a" style="left:4px;top:810px;" width="18" height="18" viewBox="0 0 18 18"><path d="M1 1.5 L9 1.5 M1 16.5 L9 16.5 M5 1.5 L5 16.5" stroke="#e01818" stroke-width="1.3"/><path d="M5 2 L3 5.5 L7 5.5 Z M5 16 L3 12.5 L7 12.5 Z" fill="#e01818"/><ellipse cx="12.5" cy="9" rx="4.6" ry="3.2" fill="#2a6fd0" stroke="#1a4a90" stroke-width="0.8"/><ellipse cx="12.5" cy="8.8" rx="1.9" ry="1.5" fill="#bfe0ff"/></svg>
<svg class="a" style="left:4px;top:832px;" width="18" height="18" viewBox="0 0 18 18"><path d="M1 16.5 L17 16.5 M1 16.5 L11 1.5" stroke="#222" stroke-width="1.1" fill="none"/><path d="M8.5 5.5 C12 7 14 11 14 15" stroke="#222" stroke-width="0.9" fill="none"/><path d="M7.5 5 L11 5 L9.5 7.5 Z M14 16 L12.5 12.5 L15.5 12.5 Z" fill="#222"/></svg>
<svg class="a" style="left:4px;top:855px;" width="18" height="18" viewBox="0 0 18 18"><circle cx="9" cy="9" r="7.6" fill="#fafafa" stroke="#222" stroke-width="1.1"/><path d="M9 9 L4 4" stroke="#222" stroke-width="1"/><path d="M3.5 3.5 L7 4.5 L4.5 7 Z" fill="#222"/></svg>
<svg class="a" style="left:4px;top:877px;" width="18" height="18" viewBox="0 0 18 18"><circle cx="9" cy="9" r="7.6" fill="#fafafa" stroke="#222" stroke-width="1.1"/><path d="M4 4 L14 14" stroke="#222" stroke-width="1"/><path d="M3.5 3.5 L7 4.5 L4.5 7 Z M14.5 14.5 L11 13.5 L13.5 11 Z" fill="#222"/></svg>
<div class="a" style="left:2px;top:900px;width:22px;height:1px;background:#d8d8d8;"></div>
<svg class="a" style="left:4px;top:909px;" width="18" height="15" viewBox="0 0 18 15"><path d="M2 13 L4 5 C5 3 7 3 9 4" stroke="#b5b5b5" stroke-width="1.6" fill="none"/><path d="M12 7 L14.5 1.5 L17 7 M13 5 L16 5" stroke="#b5b5b5" stroke-width="1.2" fill="none"/></svg>
<svg class="a" style="left:8px;top:929px;" width="10" height="17" viewBox="0 0 10 17"><rect x="0.5" y="6" width="8.5" height="10" fill="#bdbdbd"/><path d="M0.5 0.8 L9 0.8 M0.5 2.8 L9 2.8 M0.5 4.6 L9 4.6" stroke="#c9c9c9" stroke-width="1"/></svg>
<svg class="a" style="left:6px;top:949px;" width="5" height="8" viewBox="0 0 5 8"><path d="M4.5 0.5 L4.5 7.5 L0.5 4 Z" fill="#555"/></svg>
<div class="a" style="left:4px;top:160px;width:1.5px;height:1.5px;background:#9a9a9a;"></div>
<div class="a" style="left:4px;top:164px;width:1.5px;height:1.5px;background:#9a9a9a;"></div>
<div class="a" style="left:4px;top:168px;width:1.5px;height:1.5px;background:#9a9a9a;"></div>
<div class="a" style="left:4px;top:172px;width:1.5px;height:1.5px;background:#9a9a9a;"></div>
<div class="a" style="left:4px;top:176px;width:1.5px;height:1.5px;background:#9a9a9a;"></div>
<svg class="a" style="left:12px;top:159px;" width="18" height="16" viewBox="0 0 18 16"><path d="M1 11 L1 5 C1 3 3 3 5 3 L7 3 L7 0.8 L12.5 5 L7 9 L7 7 L5 7 L5 11 Z" fill="#a9a9a9"/><path d="M10 6 L10 15 L12.3 12.8 L14 16 L15.3 15.3 L13.8 12.3 L16.5 12.3 Z" fill="#efefef" stroke="#9a9a9a" stroke-width="0.8"/></svg>
<div class="a" style="left:33.5px;top:158px;width:19px;height:23px;background:#e6e6e6;"></div>
<svg class="a" style="left:38px;top:160px;" width="11" height="16" viewBox="0 0 11 16"><path d="M1 0.8 L1 12.5 L3.8 10 L6 15 L7.8 14.2 L5.6 9.4 L9.5 9.2 Z" fill="#fff" stroke="#111" stroke-width="1"/></svg>
<svg class="a" style="left:57px;top:160px;" width="17" height="16" viewBox="0 0 17 16"><rect x="0.7" y="0.7" width="12" height="8" fill="#fff" stroke="#555" stroke-width="1"/><path d="M8 3.5 L8 13 L10.2 11 L12 15 L13.5 14.3 L11.8 10.5 L14.8 10.3 Z" fill="#fff" stroke="#111" stroke-width="0.9"/></svg>
<svg class="a" style="left:30px;top:965px;" width="15" height="15" viewBox="0 0 15 15"><path d="M7.5 1.5 L3 13 M7.5 1.5 L12 13 M7.5 6 L7.5 13" stroke="#4a8fd0" stroke-width="0.9" fill="none"/><circle cx="7.5" cy="2" r="1.3" fill="#fff" stroke="#2f74b8" stroke-width="0.8"/><circle cx="5.5" cy="7" r="1.2" fill="#fff" stroke="#2f74b8" stroke-width="0.8"/><circle cx="9.5" cy="7" r="1.2" fill="#fff" stroke="#2f74b8" stroke-width="0.8"/><circle cx="3" cy="13" r="1.3" fill="#fff" stroke="#2f74b8" stroke-width="0.8"/><circle cx="7.5" cy="13" r="1.3" fill="#fff" stroke="#2f74b8" stroke-width="0.8"/><circle cx="12" cy="13" r="1.3" fill="#fff" stroke="#2f74b8" stroke-width="0.8"/></svg>
<svg class="a" style="left:90px;top:964px;" width="14" height="16" viewBox="0 0 14 16"><rect x="0.8" y="0.8" width="12" height="14" fill="#fff" stroke="#333" stroke-width="1.1"/><rect x="3" y="3" width="5" height="5" fill="#2f5fa0"/><path d="M9.5 4 L11 4 M3 11.5 L10.5 11.5 M5 10 L3 11.5 L5 13" stroke="#333" stroke-width="0.9" fill="none"/></svg>
<svg class="a" style="left:171px;top:964px;" width="17" height="17" viewBox="0 0 17 17"><circle cx="6.5" cy="6.5" r="5" fill="#dde6f0" stroke="#8a9ab0" stroke-width="1.4"/><circle cx="6" cy="6" r="2.5" fill="#b8c8dc"/><path d="M10 10 L14 14" stroke="#c89030" stroke-width="3" stroke-linecap="round"/></svg>
<svg class="a" style="left:8px;top:990px;" width="16" height="16" viewBox="0 0 16 16"><rect x="0.8" y="1.8" width="11.5" height="12.5" fill="#fff" stroke="#444" stroke-width="1.1"/><path d="M4 5 L4 7 M8 5 L8 7 M4 10 L4 12 M8 10 L8 12" stroke="#444" stroke-width="1.6"/><path d="M12.3 1.8 C14 2 14.5 3 14 5" stroke="#444" stroke-width="1" fill="none"/></svg>
<div class="a" style="left:330px;top:208px;width:6px;height:776px;background:#ececec;"></div>
<div class="a" style="left:336px;top:207px;width:1584px;height:778px;background:#fdfdfd;"></div>
<div class="a" style="left:336px;top:207px;width:1583px;height:1px;background:#6f7276;"></div>
<div class="a" style="left:336px;top:207px;width:1.5px;height:777px;background:#6a6a6a;"></div>
<div class="a" style="left:337.5px;top:208px;width:1580.5px;height:775.6px;background:#fff;background:linear-gradient(#5577a6,#ffffff);"></div>
<svg class="a" style="left:338px;top:208px" width="1580" height="775" viewBox="338 208 1580 775" font-family="Liberation Sans, sans-serif"><polygon points="1156.4,315.9 1384,442.5 1188,556 960.3,426.5" fill="#d8cbc1"/><polygon points="960.3,426.5 1188,556 1186,964 964.2,831" fill="#ada094"/><polygon points="1188,556 1384,442.5 1378,849.5 1186,964" fill="#b5a79b"/><path d="M1156.4 315.9 L1384 442.5 L1378 849.5 L1186 964 M960.3 426.5 L964.2 831 M960.3 426.5 L1188 556 L1186 964" stroke="#1a1a1a" stroke-width="1.1" fill="none"/><path d="M1178.8 328.4 L982.2 437.9" stroke="#f5f072" stroke-width="1.2" fill="none"/><path d="M982.2 437.9 L963.3 451.7" stroke="#f5f072" stroke-width="1.2" fill="none" stroke-dasharray="6 3"/><path d="M960.6 452 C960.6 441 968 435.5 982.2 437.9" stroke="#f5f072" stroke-width="1.2" fill="none"/><path d="M1156.5 340 C1160 333 1166 327 1178.8 328.4" stroke="#f5f072" stroke-width="1.2" fill="none" stroke-dasharray="6 3"/><path d="M1165.3 543.3 L1361.2 431.2" stroke="#f5f072" stroke-width="1.2" fill="none"/><path d="M1188 582.3 L1384.4 469.5" stroke="#f5f072" stroke-width="1.2" fill="none"/><path d="M1165.3 543.3 C1180 551 1187 565 1188 582.3" stroke="#f5f072" stroke-width="1.2" fill="none"/><path d="M1361.2 431.2 C1376 438 1383 452 1384.4 469.5" stroke="#f5f072" stroke-width="1.2" fill="none" stroke-dasharray="6 3"/><path d="M963.7 747.4 L1186.6 878.2" stroke="#f5f072" stroke-width="1.2" fill="none"/><path d="M963.7 747.4 C965 782 985 806 1036 788" stroke="#f5f072" stroke-width="1.2" fill="none" stroke-dasharray="6 3"/><path d="M1036 788 L1260.7 918.8" stroke="#f5f072" stroke-width="1.2" fill="none" stroke-dasharray="6 3"/><path d="M1186.6 878.2 C1188 910 1215 945 1260.7 920" stroke="#f5f072" stroke-width="1.2" fill="none"/><path d="M1155.5 634.5 L1379 762" stroke="#f5f072" stroke-width="1.2" fill="none" stroke-dasharray="6 3"/><path d="M1084 761 L1305.5 892.4" stroke="#f5f072" stroke-width="1.2" fill="none" stroke-dasharray="6 3"/><path d="M1155.5 634.5 C1156 700 1125 745 1084 761" stroke="#f5f072" stroke-width="1.2" fill="none" stroke-dasharray="6 3"/><path d="M1379 762 C1380 820 1350 870 1305.5 892.4" stroke="#f5f072" stroke-width="1.2" fill="none"/><path d="M960.3 426.5 L1156.4 315.9" stroke="#048404" stroke-width="3.2" fill="none" stroke-linecap="butt"/><path d="M1188 556 L1384 442.5" stroke="#048404" stroke-width="3.2" fill="none" stroke-linecap="butt"/><path d="M964.2 831 L1186 964" stroke="#048404" stroke-width="3.2" fill="none" stroke-linecap="butt"/><circle cx="1059" cy="370.3" r="2.6" fill="#0a6e10"/><circle cx="1288" cy="499" r="2.6" fill="#0a6e10"/><circle cx="1074.5" cy="897.3" r="2.6" fill="#0a6e10"/><path d="M1155.5 718.3 L1375.5 847" stroke="#2fd52f" stroke-width="1.4" fill="none" stroke-dasharray="7 3"/><circle cx="1265.9" cy="782.8" r="2.4" fill="#2fd52f"/><circle cx="1376" cy="847.5" r="3" fill="#2fd52f"/><path d="M1267.6 699.3 C1266 745 1240 790 1191.7 826.9" stroke="#2fd52f" stroke-width="1.3" fill="none"/><path d="M1267.3 699.3 L1266.8 688 M1191.7 826.9 L1184 831.5" stroke="#111" stroke-width="1" fill="none"/><path d="M1266.5 679.5 L1272 690 L1261 690 Z" fill="#d01028" stroke="#5a0a12" stroke-width="0.8"/><path d="M1180.5 827.5 L1186.5 837.5 L1175 837.5 Z" fill="#d01028" stroke="#5a0a12" stroke-width="0.8"/><text x="1029" y="359.5" font-size="15.5" fill="#0a820a" fill-opacity="0.9">3.000</text><text x="1257" y="488.5" font-size="15.5" fill="#0a820a" fill-opacity="0.9">3.000</text><text x="1061.5" y="885.8" font-size="15.5" fill="#0a820a" fill-opacity="0.9">10.000</text><text x="1252" y="771.8" font-size="15.5" fill="#2fd52f" fill-opacity="0.9">10.000</text><path d="M375 945.5 L375 938" stroke="#7474e6" stroke-width="2.2"/><path d="M375.3 930.5 L378.4 939.5 L372.2 939.5 Z" fill="#3a3ac0"/><path d="M376 945.5 L384 941" stroke="#4ee070" stroke-width="2.4"/><path d="M389 938.8 L384.5 945 L381 939.5 Z" fill="#128a26"/><path d="M376.5 947 L389 955 L381.5 955 Z" fill="#f07a7a"/><path d="M376.5 947 L383 950.5" stroke="#c03030" stroke-width="1.4"/><text x="373.6" y="925" font-size="8" font-weight="bold" fill="#1010ff">Z</text><text x="392.8" y="936.8" font-size="8" font-weight="bold" fill="#16e216">Y</text><text x="392.8" y="960" font-size="8" font-weight="bold" fill="#f01010">X</text></svg>
<div class="a" style="left:0px;top:1016px;width:1920px;height:24px;background:#f0f0f0;border-top:1px solid #d2d2d2;box-sizing:border-box;"></div>
<div class="a" style="left:2.2px;top:1020.8px;font-size:12px;line-height:14px;color:#333;letter-spacing:-0.393px;">For Help, press F1</div>
<div class="a" style="left:1155.5px;top:1020.8px;font-size:12px;line-height:14px;color:#5a5a5a;letter-spacing:-0.494px;">View size: 1582 x&nbsp; 776</div>
<div class="a" style="left:1293.6px;top:1020.8px;font-size:12px;line-height:14px;color:#5a5a5a;letter-spacing:-0.057px;">Units: mm, deg</div>
<div class="a" style="left:0px;top:1040px;width:1920px;height:4px;background:#2a2b31;"></div>
<div class="a" style="left:48px;top:1040px;width:344px;height:4px;background:#f0f0f0;"></div>
<div class="a" style="left:590px;top:1040px;width:48px;height:4px;background:#5c5c5c;"></div>
<svg class="a" style="left:1385px;top:1020px;" width="19" height="18" viewBox="0 0 19 18"><circle cx="7.5" cy="7.5" r="6" fill="#fafafa" stroke="#444" stroke-width="1.5"/><path d="M12 12 L17 17" stroke="#333" stroke-width="2.6" stroke-linecap="round"/><path d="M4.5 4 L8 4 L8 9 L4.5 9 Z M6.5 6 L10.5 6 L10.5 11 L6.5 11 Z" fill="#fff" stroke="#555" stroke-width="0.8"/></svg>
<svg class="a" style="left:1408px;top:1020px;" width="19" height="18" viewBox="0 0 19 18"><circle cx="7.5" cy="7.5" r="6" fill="#fafafa" stroke="#444" stroke-width="1.5"/><path d="M12 12 L17 17" stroke="#333" stroke-width="2.6" stroke-linecap="round"/><rect x="4.5" y="4.5" width="6" height="6" fill="#fff" stroke="#666" stroke-width="0.9"/></svg>
<svg class="a" style="left:1432px;top:1027px;" width="7" height="5" viewBox="0 0 7 5"><path d="M0.3 0.5 L6.3 0.5 L3.3 4 Z" fill="#444"/></svg>
<svg class="a" style="left:1443px;top:1022px;" width="18" height="14" viewBox="0 0 18 14"><path d="M1 4 L4 1 L12.5 1 L12.5 9.5 L9.5 13 L1 13 Z" fill="#f5e45a" stroke="#111" stroke-width="1.1"/><path d="M1 4 L9.5 4 L9.5 13 M9.5 4 L12.5 1" fill="none" stroke="#111" stroke-width="1"/><path d="M9.8 4.3 L12.2 1.6 L12.2 9.3 L9.8 12.4 Z" fill="#2a5fb0"/><path d="M12.5 5 L17.5 5 M14.5 2.5 L12.5 5 L14.5 7.5 M15.5 2.5 L15.5 7.5" stroke="#e01010" stroke-width="1.2" fill="none"/></svg>
<svg class="a" style="left:1467px;top:1027px;" width="7" height="5" viewBox="0 0 7 5"><path d="M0.3 0.5 L6.3 0.5 L3.3 4 Z" fill="#444"/></svg>
<svg class="a" style="left:1478px;top:1020px;" width="18" height="18" viewBox="0 0 18 18"><path d="M1 5 L5.5 1 L17 1 L17 12 L12.5 16.5 L1 16.5 Z" fill="#2f65a8" stroke="#1f4b86" stroke-width="0.9"/><path d="M1 5 L5.5 1 L17 1 L12.5 5 Z" fill="#dbe8f7" stroke="#1f4b86" stroke-width="0.8"/><path d="M12.5 5 L17 1 L17 12 L12.5 16.5 Z" fill="#b9d0ec" stroke="#1f4b86" stroke-width="0.8"/></svg>
<svg class="a" style="left:1502px;top:1027px;" width="7" height="5" viewBox="0 0 7 5"><path d="M0.3 0.5 L6.3 0.5 L3.3 4 Z" fill="#444"/></svg>
<svg class="a" style="left:1513px;top:1020px;" width="18" height="18" viewBox="0 0 18 18"><path d="M3 6 L0.5 8 L3 10 Z" fill="#555"/><path d="M4.5 8 C5 3 12 3 13 6.5" fill="none" stroke="#2a6fc0" stroke-width="1.6"/><path d="M8 0.5 L10.5 3 L5.5 3 Z" fill="#555"/><circle cx="8.5" cy="7" r="2.2" fill="#2a6fc0"/><rect x="8.5" y="8.5" width="8.5" height="8.5" fill="#fafafa" stroke="#333" stroke-width="1.2"/><rect x="10.5" y="13" width="4.5" height="4" fill="#fff" stroke="#333" stroke-width="0.9"/><path d="M10 10 L15.5 10" stroke="#333" stroke-width="1"/></svg>
<svg class="a" style="left:1537px;top:1027px;" width="7" height="5" viewBox="0 0 7 5"><path d="M0.3 0.5 L6.3 0.5 L3.3 4 Z" fill="#444"/></svg>
<div class="a" style="left:1546px;top:1019px;width:24px;height:19px;background:#c9c9c9;"></div>
<svg class="a" style="left:1548px;top:1021px;" width="19" height="16" viewBox="0 0 19 16"><path d="M1 8.5 L13 1 L17.5 2.5 L14 14.5 L2.5 15 Z" fill="#3a72b8" stroke="#1f4b86" stroke-width="0.9"/><path d="M1 8.5 L13 1 L17.5 2.5 L5.5 9.5 Z" fill="#dbe8f7" stroke="#1f4b86" stroke-width="0.8"/><path d="M5.5 9.5 L17.5 2.5 L14 14.5 L2.5 15 Z" fill="#4a84c8"/></svg>
<svg class="a" style="left:1572px;top:1021px;" width="18" height="17" viewBox="0 0 18 17"><ellipse cx="4" cy="10.3" rx="2.7" ry="3.4" fill="#cfe6fa" stroke="#2a4a78" stroke-width="1.4"/><ellipse cx="11.3" cy="11.8" rx="2.9" ry="3.6" fill="#cfe6fa" stroke="#2a4a78" stroke-width="1.4"/><path d="M3 6.8 L6 0.8 L8 3 M13.6 8 L16 3.6 L17.2 6.6 M6.4 8.2 L9 9.2" fill="none" stroke="#2a4a78" stroke-width="1.2"/></svg>
<svg class="a" style="left:1592px;top:1027px;" width="7" height="5" viewBox="0 0 7 5"><path d="M0.3 0.5 L6.3 0.5 L3.3 4 Z" fill="#444"/></svg>
<div class="a" style="left:1602px;top:1019px;width:31px;height:19px;background:#c9c9c9;"></div>
<svg class="a" style="left:1605px;top:1020px;" width="18" height="18" viewBox="0 0 18 18"><path d="M1 5 L5 1 L16.5 1 L16.5 12 L12.5 16.5 L1 16.5 Z" fill="#a9c4ea" stroke="#1f3f66" stroke-width="1"/><path d="M1 5 L12.5 5 L12.5 16.5 M12.5 5 L16.5 1" fill="none" stroke="#1f3f66" stroke-width="0.9"/><path d="M1.5 4.6 L5.2 1.5 L15.6 1.5 L12.3 4.6 Z" fill="#e4eefa"/><path d="M13 5.3 L16 2.3 L16 11.8 L13 15.4 Z" fill="#d0e0f4"/></svg>
<svg class="a" style="left:1625px;top:1027px;" width="7" height="5" viewBox="0 0 7 5"><path d="M0.3 0.5 L6.3 0.5 L3.3 4 Z" fill="#444"/></svg>
<svg class="a" style="left:1638px;top:1021px;" width="17" height="15" viewBox="0 0 17 15"><path d="M1 7 L4 4 L6 4 L8 1.5 L13.5 1.5 L13.5 5 L15.5 5 L15.5 11 L12.5 14 L1 14 Z" fill="#c6c6c6" stroke="#a2a2a2" stroke-width="0.9"/><path d="M1 7 L12.5 7 L12.5 14 M12.5 7 L15.5 5 M6 4 L11 4 L13.5 1.5 M11 4 L11 7" fill="none" stroke="#a2a2a2" stroke-width="0.8"/></svg>
<svg class="a" style="left:1657px;top:1027px;" width="7" height="5" viewBox="0 0 7 5"><path d="M0.3 0.5 L6.3 0.5 L3.3 4 Z" fill="#c4c4c4"/></svg>
<svg class="a" style="left:1670px;top:1020px;" width="18" height="17" viewBox="0 0 18 17"><path d="M1 11 L1 5 C1 3 3 3 5 3 L7 3 L7 0.8 L12.5 5 L7 9 L7 7 L5 7 L5 11 Z" fill="#b5b5b5"/><path d="M10 6 L10 15 L12.3 12.8 L14 16 L15.3 15.3 L13.8 12.3 L16.5 12.3 Z" fill="#efefef" stroke="#a5a5a5" stroke-width="0.8"/></svg>
<div class="a" style="left:1691px;top:1019px;width:24px;height:19px;background:#c9c9c9;"></div>
<svg class="a" style="left:1698px;top:1021px;" width="11" height="16" viewBox="0 0 11 16"><path d="M1 0.8 L1 12.5 L3.8 10 L6 15 L7.8 14.2 L5.6 9.4 L9.5 9.2 Z" fill="#fff" stroke="#111" stroke-width="1"/></svg>
<svg class="a" style="left:1719px;top:1021px;" width="16" height="16" viewBox="0 0 16 16"><rect x="0.7" y="0.7" width="11" height="6" fill="#fff" stroke="#bbb" stroke-width="0.9"/><path d="M6.5 3.5 L6.5 13 L8.7 11 L10.5 15 L12 14.3 L10.3 10.5 L13.3 10.3 Z" fill="#fff" stroke="#111" stroke-width="0.9"/></svg>
<div class="a" style="left:1740px;top:1019px;width:88px;height:19px;background:#fff;border:1px solid #d2d2d2;box-sizing:border-box;"></div>
<div class="a" style="left:1742.5px;top:1022.5px;width:70px;overflow:hidden;height:15px">
<div class="a" style="left:0px;top:0px;font-size:12.5px;line-height:14px;color:#2a2a2a;letter-spacing:-0.836px;">Face/Edge/Vertex</div>
</div>
<svg class="a" style="left:1818px;top:1027px;" width="7" height="5" viewBox="0 0 7 5"><path d="M0.3 0.5 L6.3 0.5 L3.3 4 Z" fill="#555"/></svg>
<div class="a" style="left:1830px;top:1019px;width:65px;height:19px;background:#fff;border:1px solid #d2d2d2;box-sizing:border-box;"></div>
<div class="a" style="left:1832.6px;top:1022.5px;font-size:12.5px;line-height:14px;color:#2a2a2a;letter-spacing:-0.230px;">Default</div>
<svg class="a" style="left:1884px;top:1027px;" width="7" height="5" viewBox="0 0 7 5"><path d="M0.3 0.5 L6.3 0.5 L3.3 4 Z" fill="#555"/></svg>
<svg class="a" style="left:1898px;top:1022px;" width="17" height="14" viewBox="0 0 17 14"><rect x="5.5" y="0.5" width="6" height="4" fill="#b8b8b8" stroke="#a8a8a8" stroke-width="0.8"/><rect x="0.5" y="9" width="6" height="4" fill="#d0d0d0" stroke="#a8a8a8" stroke-width="0.8"/><rect x="10" y="9" width="6" height="4" fill="#d0d0d0" stroke="#a8a8a8" stroke-width="0.8"/><path d="M8.5 4.5 L8.5 7 M3.5 9 L3.5 7 L13 7 L13 9" fill="none" stroke="#a8a8a8" stroke-width="0.9"/></svg>
<div class="a" style="left:1916px;top:1040px;width:1px;height:4px;background:#9a9a9a;"></div>
</body></html>
